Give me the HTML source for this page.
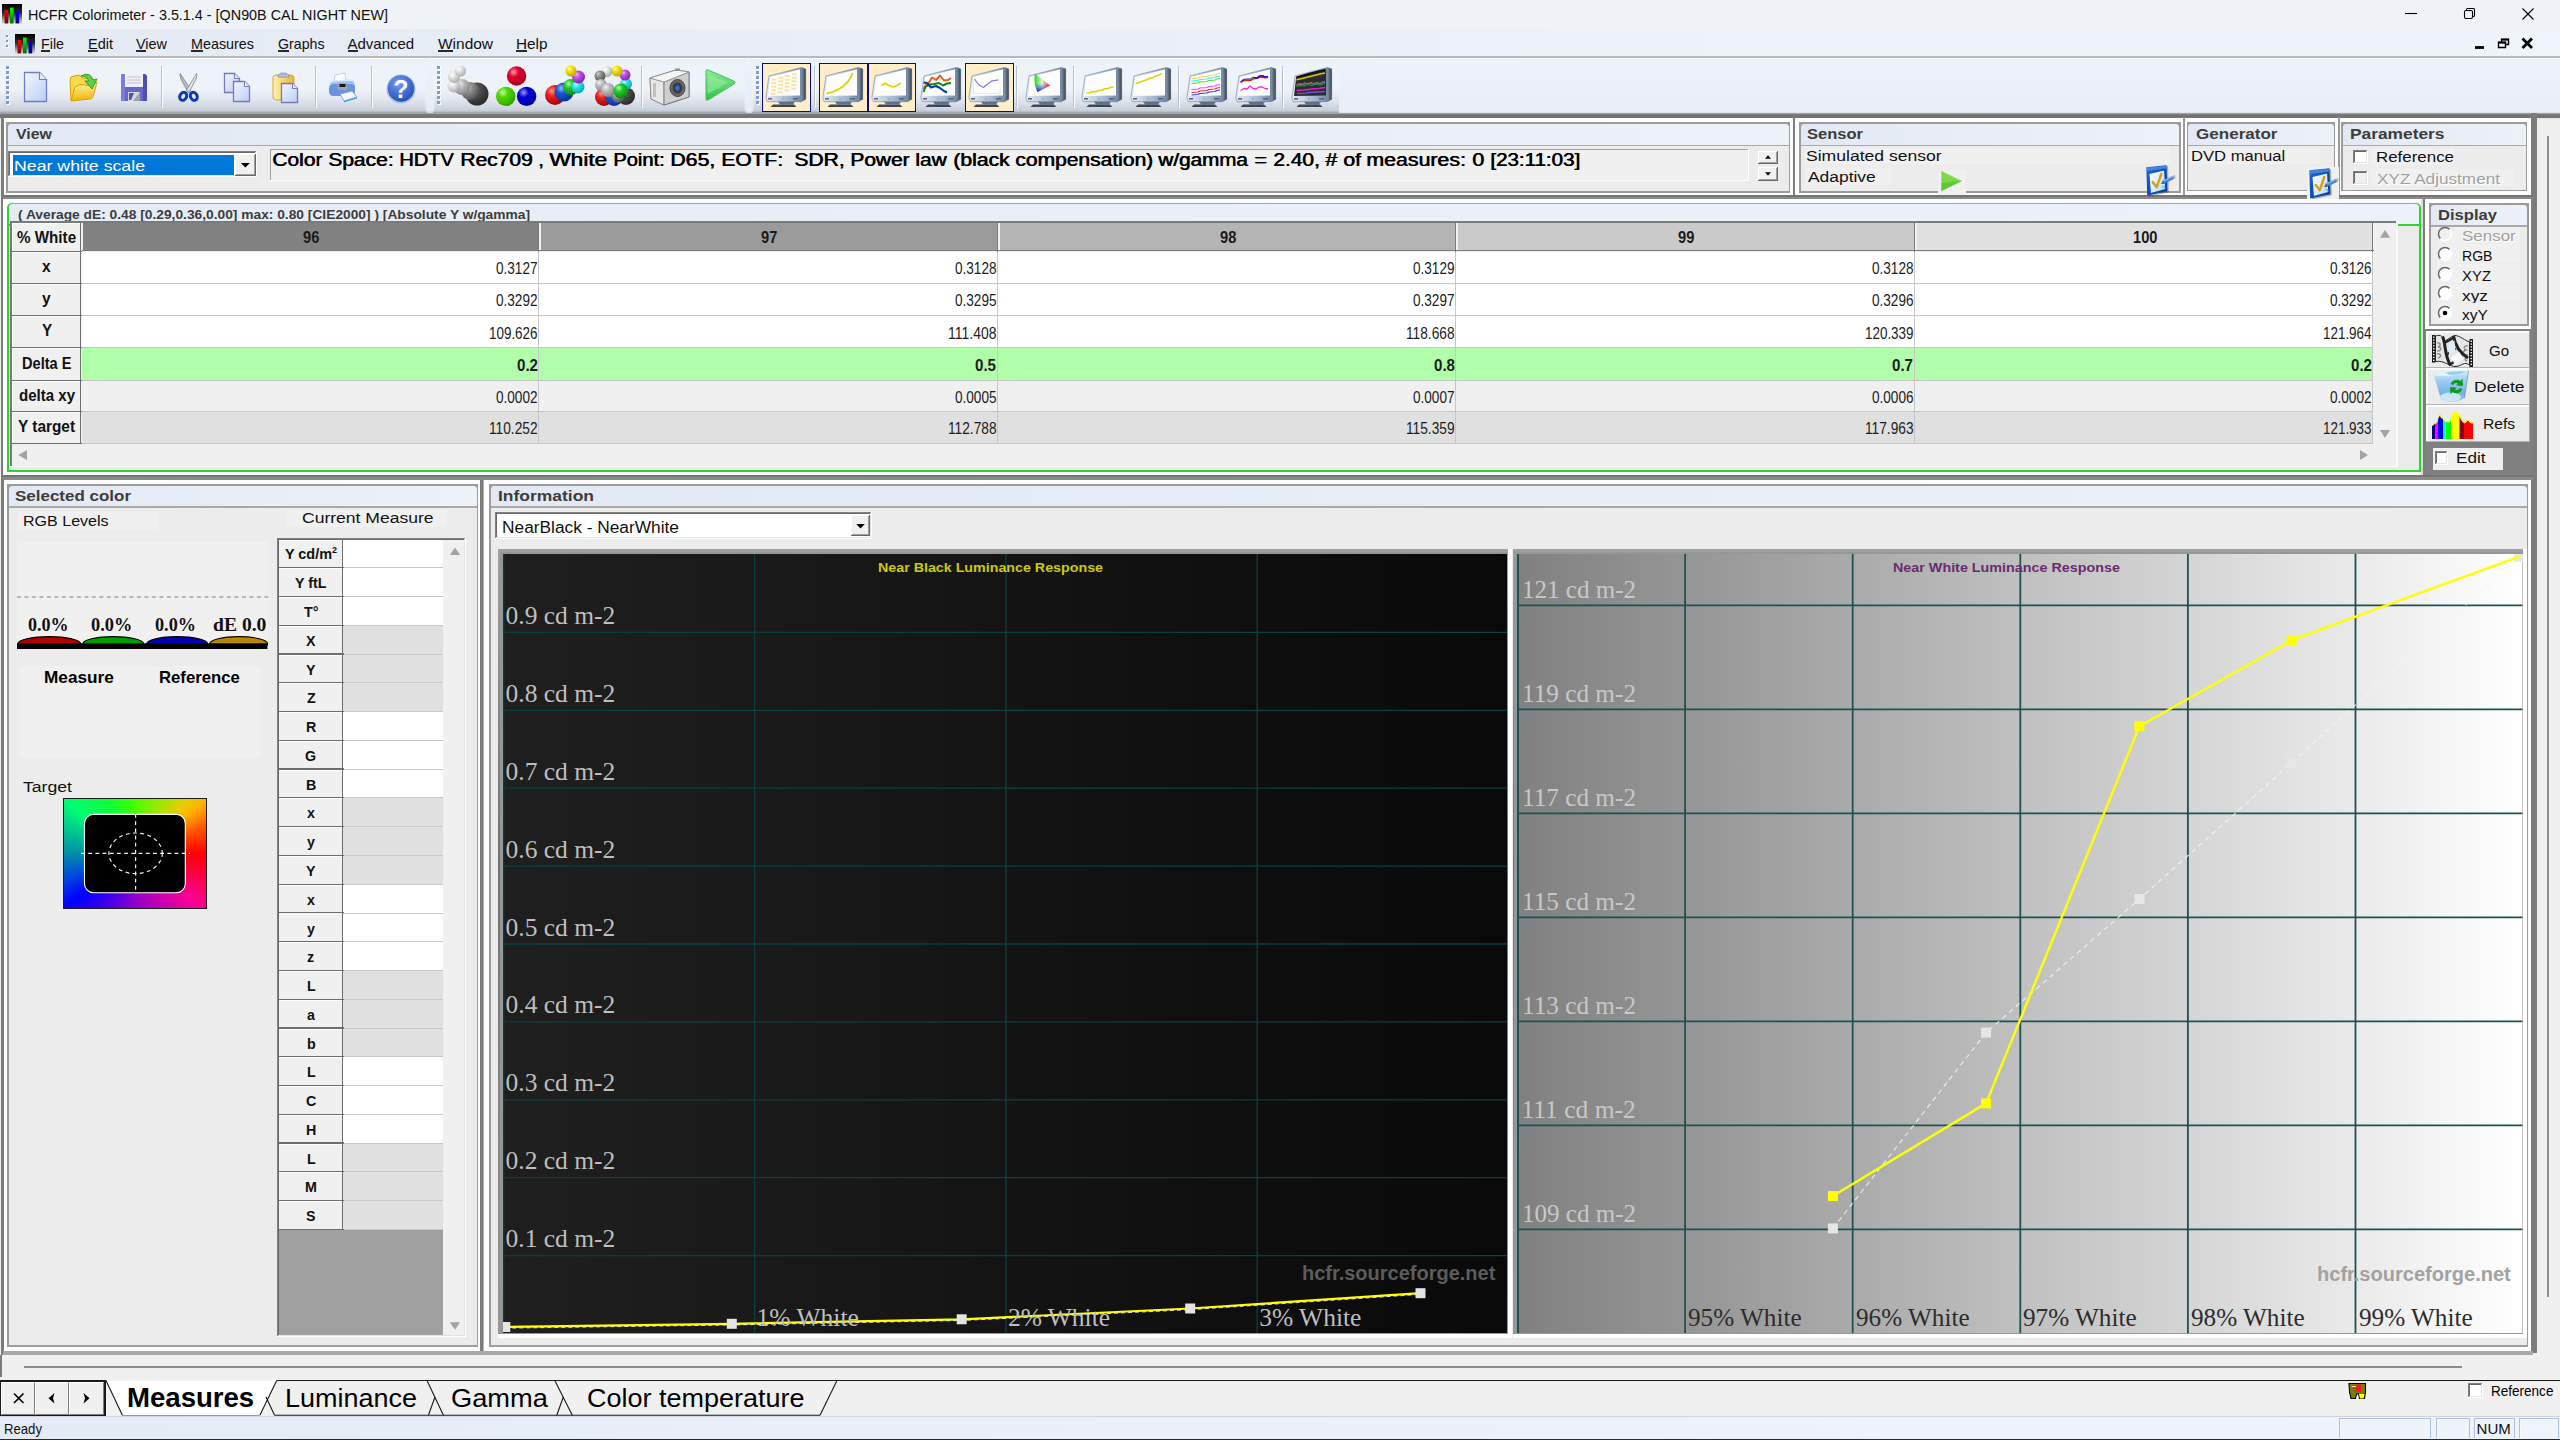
<!DOCTYPE html><html><head><meta charset="utf-8"><title>HCFR Colorimeter</title><style>html,body{margin:0;padding:0;}html{width:2560px;height:1440px;overflow:hidden;}body{width:2560px;height:1440px;overflow:hidden;position:relative;background:#f0f0f0;font-family:"Liberation Sans",sans-serif;}div,span,svg{position:absolute;box-sizing:border-box;}span{display:block;}</style></head><body><div style="left:0px;top:0px;width:2560px;height:29px;background:#eff2f6;"></div>
<svg style="left:2px;top:4px" width="20" height="20" viewBox="0 0 20 20"><defs><linearGradient id="ig2" x1="0" y1="0" x2="0" y2="1"><stop offset="0" stop-color="#000"/><stop offset=".45" stop-color="#2a2a2a"/><stop offset="1" stop-color="#e8e8e8"/></linearGradient><linearGradient id="ir2" x1="0" y1="0" x2="0" y2="1"><stop offset="0" stop-color="#ff0000"/><stop offset="1" stop-color="#7a0000"/></linearGradient><linearGradient id="igr2" x1="0" y1="0" x2="0" y2="1"><stop offset="0" stop-color="#00ff00"/><stop offset="1" stop-color="#006a00"/></linearGradient><linearGradient id="ib2" x1="0" y1="0" x2="0" y2="1"><stop offset="0" stop-color="#0000ff"/><stop offset="1" stop-color="#00007a"/></linearGradient></defs><rect width="20" height="20" fill="url(#ig2)"/><rect x="2.6" y="6" width="3.6" height="13.4" fill="url(#ir2)"/><rect x="8" y="3.6" width="3.6" height="15.8" fill="url(#igr2)"/><rect x="13.6" y="7.4" width="3.6" height="12" fill="url(#ib2)"/></svg>
<span style="left:27.50px;top:7px;font:400 15.5px/15.5px 'Liberation Sans',sans-serif;color:#101010;white-space:pre;transform-origin:0 0;transform:scaleX(0.9268);">HCFR Colorimeter - 3.5.1.4 - [QN90B CAL NIGHT NEW]</span>
<svg style="left:2380px;top:0" width="180" height="29" viewBox="0 0 180 29" fill="none" stroke="#000" stroke-width="1.1"><path d="M25 13.500H37"/><rect x="84.5" y="10.5" width="8" height="8" rx="1.5"/><path d="M86.5 10.5V9.5Q86.5 8.5 87.5 8.5H93.5Q94.5 8.5 94.5 9.5V15.5Q94.5 16.5 93.5 16.5H92.5"/><path d="M142.5 8.5L153.5 19.5M153.5 8.5L142.5 19.5"/></svg>
<div style="left:0px;top:29px;width:2560px;height:28px;background:linear-gradient(90deg,#e4eaf4 0,#e8edf6 25%,#eef2f9 70%,#eff3fa 100%);"></div>
<div style="left:0px;top:56.2px;width:2560px;height:1.5px;background:#b6b8bc;"></div>
<div style="left:0px;top:57.7px;width:2560px;height:1.8px;background:#fafbfd;"></div>
<div style="left:7px;top:36px;width:2px;height:2px;background:#fff;"></div>
<div style="left:6px;top:35px;width:2px;height:2px;background:#7f99bf;"></div>
<div style="left:7px;top:41px;width:2px;height:2px;background:#fff;"></div>
<div style="left:6px;top:40px;width:2px;height:2px;background:#7f99bf;"></div>
<div style="left:7px;top:46px;width:2px;height:2px;background:#fff;"></div>
<div style="left:6px;top:45px;width:2px;height:2px;background:#7f99bf;"></div>
<svg style="left:15px;top:34px" width="20" height="20" viewBox="0 0 20 20"><defs><linearGradient id="ig15" x1="0" y1="0" x2="0" y2="1"><stop offset="0" stop-color="#000"/><stop offset=".45" stop-color="#2a2a2a"/><stop offset="1" stop-color="#e8e8e8"/></linearGradient><linearGradient id="ir15" x1="0" y1="0" x2="0" y2="1"><stop offset="0" stop-color="#ff0000"/><stop offset="1" stop-color="#7a0000"/></linearGradient><linearGradient id="igr15" x1="0" y1="0" x2="0" y2="1"><stop offset="0" stop-color="#00ff00"/><stop offset="1" stop-color="#006a00"/></linearGradient><linearGradient id="ib15" x1="0" y1="0" x2="0" y2="1"><stop offset="0" stop-color="#0000ff"/><stop offset="1" stop-color="#00007a"/></linearGradient></defs><rect width="20" height="20" fill="url(#ig15)"/><rect x="2.6" y="6" width="3.6" height="13.4" fill="url(#ir15)"/><rect x="8" y="3.6" width="3.6" height="15.8" fill="url(#igr15)"/><rect x="13.6" y="7.4" width="3.6" height="12" fill="url(#ib15)"/></svg>
<span style="left:41.00px;top:36px;font:400 15px/15px 'Liberation Sans',sans-serif;color:#111;white-space:pre;transform-origin:0 0;transform:scaleX(0.9515);">File</span>
<div style="left:41px;top:50px;width:9px;height:1.7px;background:#2a2a2a;"></div>
<span style="left:87.50px;top:36px;font:400 15px/15px 'Liberation Sans',sans-serif;color:#111;white-space:pre;transform-origin:0 0;transform:scaleX(0.9672);">Edit</span>
<div style="left:87.5px;top:50px;width:10px;height:1.7px;background:#2a2a2a;"></div>
<span style="left:136.00px;top:36px;font:400 15px/15px 'Liberation Sans',sans-serif;color:#111;white-space:pre;transform-origin:0 0;transform:scaleX(0.9614);">View</span>
<div style="left:136px;top:50px;width:10px;height:1.7px;background:#2a2a2a;"></div>
<span style="left:191.00px;top:36px;font:400 15px/15px 'Liberation Sans',sans-serif;color:#111;white-space:pre;transform-origin:0 0;transform:scaleX(0.9565);">Measures</span>
<div style="left:191px;top:50px;width:12px;height:1.7px;background:#2a2a2a;"></div>
<span style="left:277.50px;top:36px;font:400 15px/15px 'Liberation Sans',sans-serif;color:#111;white-space:pre;transform-origin:0 0;transform:scaleX(0.9453);">Graphs</span>
<div style="left:277.5px;top:50px;width:11px;height:1.7px;background:#2a2a2a;"></div>
<span style="left:347.50px;top:36px;font:400 15px/15px 'Liberation Sans',sans-serif;color:#111;white-space:pre;transform-origin:0 0;">Advanced</span>
<div style="left:347.5px;top:50px;width:10px;height:1.7px;background:#2a2a2a;"></div>
<span style="left:437.50px;top:36px;font:400 15px/15px 'Liberation Sans',sans-serif;color:#111;white-space:pre;transform-origin:0 0;transform:scaleX(1.0309);">Window</span>
<div style="left:437.5px;top:50px;width:15px;height:1.7px;background:#2a2a2a;"></div>
<span style="left:516.00px;top:36px;font:400 15px/15px 'Liberation Sans',sans-serif;color:#111;white-space:pre;transform-origin:0 0;transform:scaleX(1.0210);">Help</span>
<div style="left:516px;top:50px;width:11px;height:1.7px;background:#2a2a2a;"></div>
<svg style="left:2460px;top:30px" width="100" height="26" viewBox="0 0 100 26" fill="none" stroke="#000"><path d="M15 17.500H24" stroke-width="2.800"/><path d="M38.5 12.5h7v5h-7zM41.5 12.5v-3h7v5h-3" stroke-width="1.4"/><path d="M38 12.5h8M41 9.5h8" stroke-width="2"/><path d="M62.500 8.500l9.500 9.500M72 8.500l-9.500 9.500" stroke-width="2.800"/></svg>
<div style="left:0px;top:59.5px;width:2560px;height:53.5px;background:linear-gradient(#e9eff7 0%,#eef3f9 6%,#eef3f9 55%,#e1e6ef 74%,#cfd5df 91%,#c6ccd6 96%,#9a9ea6 100%);"></div>
<div style="left:0px;top:113px;width:2560px;height:4px;background:linear-gradient(#9a9a9a,#7c7c7c 50%,#8a8a8a);"></div>
<div style="left:0px;top:117px;width:2560px;height:3px;background:linear-gradient(#d8d8d8,#f0f0f0);"></div>
<div style="left:1338.5px;top:59px;width:1221.5px;height:54px;background:linear-gradient(#eef2f9,#e9eef7);"></div>
<div style="left:1338.5px;top:112px;width:1221.5px;height:1px;background:#dfe4ec;"></div>
<div style="left:7px;top:67.2px;width:3px;height:3px;background:#fff;"></div>
<div style="left:6px;top:66.2px;width:3px;height:3px;background:#7f9cc4;"></div>
<div style="left:7px;top:72.2px;width:3px;height:3px;background:#fff;"></div>
<div style="left:6px;top:71.2px;width:3px;height:3px;background:#7f9cc4;"></div>
<div style="left:7px;top:77.2px;width:3px;height:3px;background:#fff;"></div>
<div style="left:6px;top:76.2px;width:3px;height:3px;background:#7f9cc4;"></div>
<div style="left:7px;top:82.2px;width:3px;height:3px;background:#fff;"></div>
<div style="left:6px;top:81.2px;width:3px;height:3px;background:#7f9cc4;"></div>
<div style="left:7px;top:87.2px;width:3px;height:3px;background:#fff;"></div>
<div style="left:6px;top:86.2px;width:3px;height:3px;background:#7f9cc4;"></div>
<div style="left:7px;top:92.2px;width:3px;height:3px;background:#fff;"></div>
<div style="left:6px;top:91.2px;width:3px;height:3px;background:#7f9cc4;"></div>
<div style="left:7px;top:97.2px;width:3px;height:3px;background:#fff;"></div>
<div style="left:6px;top:96.2px;width:3px;height:3px;background:#7f9cc4;"></div>
<div style="left:7px;top:102.2px;width:3px;height:3px;background:#fff;"></div>
<div style="left:6px;top:101.2px;width:3px;height:3px;background:#7f9cc4;"></div>
<div style="left:438.3px;top:67.2px;width:3px;height:3px;background:#fff;"></div>
<div style="left:437.3px;top:66.2px;width:3px;height:3px;background:#7f9cc4;"></div>
<div style="left:438.3px;top:72.2px;width:3px;height:3px;background:#fff;"></div>
<div style="left:437.3px;top:71.2px;width:3px;height:3px;background:#7f9cc4;"></div>
<div style="left:438.3px;top:77.2px;width:3px;height:3px;background:#fff;"></div>
<div style="left:437.3px;top:76.2px;width:3px;height:3px;background:#7f9cc4;"></div>
<div style="left:438.3px;top:82.2px;width:3px;height:3px;background:#fff;"></div>
<div style="left:437.3px;top:81.2px;width:3px;height:3px;background:#7f9cc4;"></div>
<div style="left:438.3px;top:87.2px;width:3px;height:3px;background:#fff;"></div>
<div style="left:437.3px;top:86.2px;width:3px;height:3px;background:#7f9cc4;"></div>
<div style="left:438.3px;top:92.2px;width:3px;height:3px;background:#fff;"></div>
<div style="left:437.3px;top:91.2px;width:3px;height:3px;background:#7f9cc4;"></div>
<div style="left:438.3px;top:97.2px;width:3px;height:3px;background:#fff;"></div>
<div style="left:437.3px;top:96.2px;width:3px;height:3px;background:#7f9cc4;"></div>
<div style="left:438.3px;top:102.2px;width:3px;height:3px;background:#fff;"></div>
<div style="left:437.3px;top:101.2px;width:3px;height:3px;background:#7f9cc4;"></div>
<div style="left:757px;top:67.2px;width:3px;height:3px;background:#fff;"></div>
<div style="left:756px;top:66.2px;width:3px;height:3px;background:#7f9cc4;"></div>
<div style="left:757px;top:72.2px;width:3px;height:3px;background:#fff;"></div>
<div style="left:756px;top:71.2px;width:3px;height:3px;background:#7f9cc4;"></div>
<div style="left:757px;top:77.2px;width:3px;height:3px;background:#fff;"></div>
<div style="left:756px;top:76.2px;width:3px;height:3px;background:#7f9cc4;"></div>
<div style="left:757px;top:82.2px;width:3px;height:3px;background:#fff;"></div>
<div style="left:756px;top:81.2px;width:3px;height:3px;background:#7f9cc4;"></div>
<div style="left:757px;top:87.2px;width:3px;height:3px;background:#fff;"></div>
<div style="left:756px;top:86.2px;width:3px;height:3px;background:#7f9cc4;"></div>
<div style="left:757px;top:92.2px;width:3px;height:3px;background:#fff;"></div>
<div style="left:756px;top:91.2px;width:3px;height:3px;background:#7f9cc4;"></div>
<div style="left:757px;top:97.2px;width:3px;height:3px;background:#fff;"></div>
<div style="left:756px;top:96.2px;width:3px;height:3px;background:#7f9cc4;"></div>
<div style="left:757px;top:102.2px;width:3px;height:3px;background:#fff;"></div>
<div style="left:756px;top:101.2px;width:3px;height:3px;background:#7f9cc4;"></div>
<div style="left:427px;top:59.3px;width:6px;height:53.2px;background:linear-gradient(#eef3f9,#e6ecf5);border-radius:3px;box-shadow:0 0 0 1.5px rgba(236,241,248,.7);"></div>
<div style="left:745.5px;top:59.3px;width:6px;height:53.2px;background:linear-gradient(#eef3f9,#e6ecf5);border-radius:3px;box-shadow:0 0 0 1.5px rgba(236,241,248,.7);"></div>
<div style="left:161px;top:66px;width:1px;height:41px;background:#b9c1ce;"></div>
<div style="left:162px;top:67px;width:1px;height:41px;background:#fbfcfe;"></div>
<div style="left:315px;top:66px;width:1px;height:41px;background:#b9c1ce;"></div>
<div style="left:316px;top:67px;width:1px;height:41px;background:#fbfcfe;"></div>
<div style="left:371px;top:66px;width:1px;height:41px;background:#b9c1ce;"></div>
<div style="left:372px;top:67px;width:1px;height:41px;background:#fbfcfe;"></div>
<div style="left:641px;top:66px;width:1px;height:41px;background:#b9c1ce;"></div>
<div style="left:642px;top:67px;width:1px;height:41px;background:#fbfcfe;"></div>
<div style="left:814px;top:66px;width:1px;height:41px;background:#b9c1ce;"></div>
<div style="left:815px;top:67px;width:1px;height:41px;background:#fbfcfe;"></div>
<div style="left:1016px;top:66px;width:1px;height:41px;background:#b9c1ce;"></div>
<div style="left:1017px;top:67px;width:1px;height:41px;background:#fbfcfe;"></div>
<div style="left:1073px;top:66px;width:1px;height:41px;background:#b9c1ce;"></div>
<div style="left:1074px;top:67px;width:1px;height:41px;background:#fbfcfe;"></div>
<div style="left:1178px;top:66px;width:1px;height:41px;background:#b9c1ce;"></div>
<div style="left:1179px;top:67px;width:1px;height:41px;background:#fbfcfe;"></div>
<div style="left:1282px;top:66px;width:1px;height:41px;background:#b9c1ce;"></div>
<div style="left:1283px;top:67px;width:1px;height:41px;background:#fbfcfe;"></div>
<svg width="0" height="0" style="left:0;top:0"><defs>
<linearGradient id="pg" x1="0" y1="0" x2="1" y2="1"><stop offset="0" stop-color="#f4f7ff"/><stop offset="1" stop-color="#b9cdf6"/></linearGradient>
<linearGradient id="fold" x1="0" y1="0" x2="0" y2="1"><stop offset="0" stop-color="#fff7a8"/><stop offset="1" stop-color="#f0b400"/></linearGradient>
<linearGradient id="clip" x1="0" y1="0" x2="1" y2="0"><stop offset="0" stop-color="#fdf3b0"/><stop offset="1" stop-color="#e8b530"/></linearGradient>
<radialGradient id="hb" cx=".4" cy=".3" r=".8"><stop offset="0" stop-color="#6f9cf0"/><stop offset="1" stop-color="#1b47b8"/></radialGradient>
<linearGradient id="mon" x1="0" y1="0" x2="1" y2="0"><stop offset="0" stop-color="#e6edf6"/><stop offset=".6" stop-color="#9fb4cd"/><stop offset="1" stop-color="#5f7896"/></linearGradient>
<linearGradient id="monside" x1="0" y1="0" x2="1" y2="0"><stop offset="0" stop-color="#7f93aa"/><stop offset="1" stop-color="#39424d"/></linearGradient>
<linearGradient id="cam" x1="0" y1="0" x2="0" y2="1"><stop offset="0" stop-color="#f4f4f4"/><stop offset="1" stop-color="#b4b4b4"/></linearGradient>
<linearGradient id="play" x1="0" y1="0" x2="0" y2="1"><stop offset="0" stop-color="#8fe89a"/><stop offset=".6" stop-color="#55d266"/><stop offset="1" stop-color="#2fbf45"/></linearGradient>
<linearGradient id="cie" x1="0" y1="0" x2="1" y2="0"><stop offset="0" stop-color="#18d818"/><stop offset=".5" stop-color="#e8f0d0"/><stop offset="1" stop-color="#ff1010"/></linearGradient>
<linearGradient id="cie2" x1="0" y1="0" x2="0" y2="1"><stop offset="0" stop-color="#20e020" stop-opacity="0"/><stop offset=".55" stop-color="#3050ff" stop-opacity="0"/><stop offset="1" stop-color="#1010ff" stop-opacity="1"/></linearGradient>
<radialGradient id="br" cx=".35" cy=".3" r=".75"><stop offset="0" stop-color="#ff9aa8"/><stop offset=".35" stop-color="#e0002c"/><stop offset="1" stop-color="#a80020"/></radialGradient><radialGradient id="bg" cx=".35" cy=".3" r=".75"><stop offset="0" stop-color="#c8ff9a"/><stop offset=".35" stop-color="#4cd800"/><stop offset="1" stop-color="#2fa000"/></radialGradient><radialGradient id="bb" cx=".35" cy=".3" r=".75"><stop offset="0" stop-color="#9a9aff"/><stop offset=".35" stop-color="#0000d8"/><stop offset="1" stop-color="#000098"/></radialGradient><radialGradient id="bw" cx=".35" cy=".3" r=".75"><stop offset="0" stop-color="#ffffff"/><stop offset=".35" stop-color="#e4e4e4"/><stop offset="1" stop-color="#a8a8a8"/></radialGradient><radialGradient id="bl" cx=".35" cy=".3" r=".75"><stop offset="0" stop-color="#f4f4f4"/><stop offset=".35" stop-color="#c0c0c0"/><stop offset="1" stop-color="#808080"/></radialGradient><radialGradient id="bm" cx=".35" cy=".3" r=".75"><stop offset="0" stop-color="#d0d0d0"/><stop offset=".35" stop-color="#909090"/><stop offset="1" stop-color="#505050"/></radialGradient><radialGradient id="bd" cx=".35" cy=".3" r=".75"><stop offset="0" stop-color="#909090"/><stop offset=".35" stop-color="#505050"/><stop offset="1" stop-color="#282828"/></radialGradient><radialGradient id="by" cx=".35" cy=".3" r=".75"><stop offset="0" stop-color="#ffffc0"/><stop offset=".35" stop-color="#f4e000"/><stop offset="1" stop-color="#c0a800"/></radialGradient><radialGradient id="bp" cx=".35" cy=".3" r=".75"><stop offset="0" stop-color="#f0b0ff"/><stop offset=".35" stop-color="#c050e8"/><stop offset="1" stop-color="#8020b0"/></radialGradient><radialGradient id="bc" cx=".35" cy=".3" r=".75"><stop offset="0" stop-color="#c0ffff"/><stop offset=".35" stop-color="#30e0e8"/><stop offset="1" stop-color="#10a0b0"/></radialGradient><radialGradient id="bR" cx=".35" cy=".3" r=".75"><stop offset="0" stop-color="#ff9090"/><stop offset=".35" stop-color="#e82020"/><stop offset="1" stop-color="#a00000"/></radialGradient><radialGradient id="bB" cx=".35" cy=".3" r=".75"><stop offset="0" stop-color="#90c0ff"/><stop offset=".35" stop-color="#1858d0"/><stop offset="1" stop-color="#0030a0"/></radialGradient><radialGradient id="bG" cx=".35" cy=".3" r=".75"><stop offset="0" stop-color="#b0ffb0"/><stop offset=".35" stop-color="#20c828"/><stop offset="1" stop-color="#108018"/></radialGradient></defs></svg>
<svg style="left:22px;top:70px" width="28" height="34" viewBox="0 0 28 34"><path d="M2.5 2.5H17.5L24.5 9.5V31.5H2.5Z" fill="url(#pg)" stroke="#6a7fc0" stroke-width="1.3"/><path d="M17.5 2.5V9.5H24.5" fill="#e8eefc" stroke="#6a7fc0" stroke-width="1.1"/></svg>
<svg style="left:66px;top:70px" width="36" height="34" viewBox="0 0 36 34"><path d="M4 10Q4 6 8 6L13 5L17 8L27 9V14L5 30Z" fill="#f7d94a" stroke="#d9a100" stroke-width="1"/><path d="M5 31L9 17Q14 13 19 15T31 12L27 27Q26 29 24 29Z" fill="url(#fold)" stroke="#d9a100" stroke-width="1"/><path d="M15 6Q24 1 27 10L31 9L26 19L19 11L23 11Q21 6 15 6Z" fill="#5fd04a" stroke="#2f9e28" stroke-width="1"/></svg>
<svg style="left:119px;top:72px" width="30" height="32" viewBox="0 0 30 32"><path d="M2 3Q2 2 3 2H26L28 4V28Q28 29 27 29H3Q2 29 2 28Z" fill="#6468c8"/><path d="M2 3Q2 2 3 2H6V29H3Q2 29 2 28Z" fill="#7a7ed8"/><path d="M24 2H26L28 4V28Q28 29 27 29H24Z" fill="#4c50b0"/><rect x="6" y="2" width="18" height="13" fill="#f0f0f4"/><path d="M8 5H22M8 8H22M8 11H22" stroke="#c4c4cc" stroke-width="1"/><rect x="9" y="20" width="12" height="9" fill="#d8d8dc"/><path d="M10 21H15L12 28H10Z" fill="#4c50b0"/><path d="M21 20V29H14Z" fill="#a0a0a8"/></svg>
<svg style="left:177px;top:72px" width="24" height="31" viewBox="0 0 24 31"><path d="M3.200 1.500Q2.500 3 4 7L11 20.500L14 18Z" fill="#b4bac6" stroke="#6c7488" stroke-width=".7"/><path d="M19.500 1.500Q20.500 3 19 7L12 20.500L9.500 18Z" fill="#dfe3ea" stroke="#6c7488" stroke-width=".7"/><ellipse cx="6.200" cy="24.300" rx="3.300" ry="4.200" fill="none" stroke="#0c3ab4" stroke-width="3" transform="rotate(28 6.200 24.300)"/><ellipse cx="16.800" cy="24.300" rx="3.300" ry="4.200" fill="none" stroke="#0c3ab4" stroke-width="3" transform="rotate(-28 16.800 24.300)"/></svg>
<svg style="left:222px;top:71px" width="30" height="32" viewBox="0 0 30 32"><path d="M2.5 2.5H12.5L17.5 7.5V21.5H2.5Z" fill="url(#pg)" stroke="#7a7ab8" stroke-width="1.3"/><path d="M12.5 2.5V7.5H17.5" fill="#e8eefc" stroke="#7a7ab8"/><path d="M11.500 10.500H22.500L27.500 15.500V30.500H11.500Z" fill="url(#pg)" stroke="#7a7ab8" stroke-width="1.3"/><path d="M22.5 10.5V15.5H27.5" fill="#e8eefc" stroke="#7a7ab8"/></svg>
<svg style="left:271px;top:71px" width="30" height="33" viewBox="0 0 30 33"><rect x="2" y="4" width="21" height="25" rx="3" fill="url(#clip)" stroke="#d8a828" stroke-width="1"/><path d="M7 6Q7 3 9 3H16Q18 3 18 6Z" fill="#c8ccd8" stroke="#8088a0" stroke-width=".8"/><rect x="9" y="1.500" width="7" height="3" rx="1" fill="#a8b0c4"/><path d="M10.500 12.500H21.500L26.500 17.500V31.500H10.500Z" fill="url(#pg)" stroke="#7a7ab8" stroke-width="1.3"/><path d="M21.5 12.5V17.5H26.5" fill="#e8eefc" stroke="#7a7ab8"/></svg>
<svg style="left:326px;top:72px" width="32" height="31" viewBox="0 0 32 31"><path d="M9 3L19 1L20 12L8 13Z" fill="#fdfdff" stroke="#b8c4d8" stroke-width=".8"/><path d="M3 14Q3 9 9 9L24 8Q29 8 29 13V20Q29 24 24 24H8Q3 24 3 19Z" fill="#a4c0f0"/><path d="M3 17Q3 12 9 12H24Q29 12 29 16V20Q29 24 24 24H8Q3 24 3 19Z" fill="#6c94dc"/><path d="M3 14Q3 9 9 9L24 8Q29 8 29 13" fill="none" stroke="#dbe8ff" stroke-width="1.4"/><rect x="12" y="11" width="9" height="7" rx="1" fill="#a0a4ac"/><rect x="13.500" y="12" width="6" height="3" fill="#181818"/><path d="M14 22L26 19L31 25L18 29Z" fill="#f4f8ff" stroke="#7098d8" stroke-width=".8"/><path d="M18 29L31 25V26.500L18 30.500Z" fill="#40a8e0"/></svg>
<svg style="left:385px;top:73px" width="32" height="32" viewBox="0 0 32 32"><circle cx="16" cy="16" r="14.6" fill="#aebcdc"/><circle cx="16" cy="15.500" r="13.2" fill="url(#hb)"/><text x="16" y="25" font-family="Liberation Sans, sans-serif" font-weight="700" font-size="25" fill="#fff" text-anchor="middle">?</text></svg>
<svg style="left:446px;top:65px" width="44" height="44" viewBox="0 0 44 44"><circle cx="31" cy="29" r="11.5" fill="url(#bd)"/><circle cx="24" cy="26" r="9" fill="url(#bm)"/><circle cx="16" cy="22" r="8" fill="url(#bl)"/><circle cx="8" cy="21" r="6.5" fill="url(#bw)"/><circle cx="8" cy="12" r="6" fill="url(#bw)"/><circle cx="14.5" cy="6" r="5.5" fill="url(#bw)"/></svg>
<svg style="left:495px;top:65px" width="44" height="44" viewBox="0 0 44 44"><circle cx="21.6" cy="11" r="9.7" fill="url(#br)"/><circle cx="10.8" cy="31.4" r="9.7" fill="url(#bg)"/><circle cx="31.6" cy="31.4" r="9.7" fill="url(#bb)"/></svg>
<svg style="left:544px;top:65px" width="44" height="44" viewBox="0 0 44 44"><circle cx="11" cy="30" r="10" fill="url(#bR)"/><circle cx="20" cy="27" r="9.5" fill="url(#bB)"/><circle cx="27" cy="22" r="8" fill="url(#bG)"/><circle cx="34" cy="22" r="6.5" fill="url(#bc)"/><circle cx="34.5" cy="12" r="6.5" fill="url(#bp)"/><circle cx="27" cy="6" r="5.5" fill="url(#by)"/></svg>
<svg style="left:593px;top:65px" width="44" height="44" viewBox="0 0 44 44"><circle cx="11" cy="32" r="9" fill="url(#bR)"/><circle cx="21" cy="32" r="9" fill="url(#bB)"/><circle cx="33" cy="31" r="9" fill="url(#bd)"/><circle cx="25" cy="32" r="6" fill="url(#bm)"/><circle cx="33" cy="19" r="6" fill="url(#bc)"/><circle cx="32" cy="10" r="5.5" fill="url(#bp)"/><circle cx="24" cy="6" r="5.5" fill="url(#by)"/><circle cx="14" cy="6.5" r="5.5" fill="url(#bw)"/><circle cx="7" cy="11" r="5.5" fill="url(#bm)"/><circle cx="8" cy="20" r="6" fill="url(#bl)"/><circle cx="15" cy="25" r="7" fill="url(#bl)"/><circle cx="28" cy="26" r="7.5" fill="url(#bG)"/></svg>
<svg style="left:648px;top:66px" width="44" height="42" viewBox="0 0 44 42"><path d="M2 12L28 4L41 6V31L16 39L3 33Z" fill="url(#cam)" stroke="#707070" stroke-width="1"/><path d="M2 12L16 16V39L3 33Z" fill="#e8e8e8" stroke="#8a8a8a" stroke-width=".8"/><path d="M16 16L41 6V31L16 39Z" fill="#cfcfcf" stroke="#707070" stroke-width=".8"/><path d="M2 12L28 4L41 6L16 16Z" fill="#f6f6f6" stroke="#8a8a8a" stroke-width=".8"/><rect x="5" y="17" width="3" height="14" fill="#c0c0c0"/><ellipse cx="29.500" cy="22" rx="7.500" ry="8.500" fill="#686868" stroke="#404040"/><ellipse cx="29.500" cy="22" rx="5" ry="5.800" fill="#3c3c44"/><ellipse cx="29.500" cy="22" rx="2.300" ry="2.600" fill="#2a6cd8"/><rect x="27" y="2.500" width="5" height="2.500" fill="#909090"/></svg>
<svg style="left:703px;top:68px" width="34" height="36" viewBox="0 0 34 36"><path d="M3 3Q3 1 5 2L31 13Q33 14 31 16L5 32Q3 33 3 31Z" fill="url(#play)" stroke="#3fc455" stroke-width="1"/><path d="M4.500 6L25 14.500L4.500 26Z" fill="#9aeea6" opacity=".55"/></svg>
<div style="left:762px;top:62.5px;width:48.8px;height:49px;background:#ffeec8;border:1.5px solid #0a0a8c;"></div>
<svg style="left:762px;top:62.5px" width="49" height="49" viewBox="0 0 49 49"><path d="M7 12.9L39.300 4.500L43.700 5.900V36.300L39.300 38.700H5.300L3.800 35Z" fill="url(#mon)"/><path d="M39.300 4.500L43.700 5.900V36.300L39.300 38.700Z" fill="url(#monside)"/><path d="M8.200 14L38 6.300V32.600L6 33Z" fill="#fdfdfd"/><rect x="9.5" y="15.5" width="5" height="2" fill="#ffe0a0"/><rect x="16.3" y="13.75" width="5" height="2" fill="#ffe0a0"/><rect x="23.1" y="12.0" width="5" height="2" fill="#ffe0a0"/><rect x="29.9" y="10.25" width="5" height="2" fill="#ffe0a0"/><rect x="9.3" y="19.1" width="5" height="2" fill="#ffe0a0"/><rect x="16.1" y="17.35" width="5" height="2" fill="#ffe0a0"/><rect x="22.900000000000002" y="15.600000000000001" width="5" height="2" fill="#ffe0a0"/><rect x="29.7" y="13.850000000000001" width="5" height="2" fill="#ffe0a0"/><rect x="9.1" y="22.7" width="5" height="2" fill="#ffe0a0"/><rect x="15.9" y="20.95" width="5" height="2" fill="#ffe0a0"/><rect x="22.700000000000003" y="19.2" width="5" height="2" fill="#ffe0a0"/><rect x="29.5" y="17.45" width="5" height="2" fill="#ffe0a0"/><rect x="8.9" y="26.3" width="5" height="2" fill="#ffe0a0"/><rect x="15.700000000000001" y="24.55" width="5" height="2" fill="#ffe0a0"/><rect x="22.5" y="22.8" width="5" height="2" fill="#ffe0a0"/><rect x="29.299999999999997" y="21.05" width="5" height="2" fill="#ffe0a0"/><rect x="8.7" y="29.9" width="5" height="2" fill="#ffe0a0"/><rect x="15.5" y="28.15" width="5" height="2" fill="#ffe0a0"/><rect x="22.3" y="26.4" width="5" height="2" fill="#ffe0a0"/><rect x="29.099999999999998" y="24.65" width="5" height="2" fill="#ffe0a0"/><path d="M7 12.9L39.300 4.500L43.700 5.900V36.300L39.300 38.700H5.300L3.800 35Z" fill="none" stroke="#5a6f8a" stroke-width=".7" opacity=".7"/><rect x="6" y="35" width="4" height="1.600" fill="#5a6a7c"/><rect x="31" y="35" width="5" height="1.600" fill="#5a6a7c"/><circle cx="21" cy="36" r=".8" fill="#8a9ab0"/><path d="M16 38.700H33L31 41.600H18Z" fill="#5d7088"/><path d="M11 41.600H32L34.500 44H8.500Z" fill="#3c4654"/></svg>
<div style="left:819px;top:62.5px;width:48.8px;height:49px;background:#ffeec8;border:1.5px solid #0a0a8c;"></div>
<svg style="left:819px;top:62.5px" width="49" height="49" viewBox="0 0 49 49"><path d="M7 12.9L39.300 4.500L43.700 5.900V36.300L39.300 38.700H5.300L3.800 35Z" fill="url(#mon)"/><path d="M39.300 4.500L43.700 5.900V36.300L39.300 38.700Z" fill="url(#monside)"/><path d="M8.200 14L38 6.300V32.600L6 33Z" fill="#fdfdfd"/><polyline points="7.500,30.500 12,29.500 18,27.200 24,23.500 29,18.500 32,14 33.500,10" fill="none" stroke="#e0d400" stroke-width="1.8" stroke-linejoin="round"/><path d="M7 12.9L39.300 4.500L43.700 5.900V36.300L39.300 38.700H5.300L3.800 35Z" fill="none" stroke="#5a6f8a" stroke-width=".7" opacity=".7"/><rect x="6" y="35" width="4" height="1.600" fill="#5a6a7c"/><rect x="31" y="35" width="5" height="1.600" fill="#5a6a7c"/><circle cx="21" cy="36" r=".8" fill="#8a9ab0"/><path d="M16 38.700H33L31 41.600H18Z" fill="#5d7088"/><path d="M11 41.600H32L34.500 44H8.500Z" fill="#3c4654"/></svg>
<div style="left:867.5px;top:62.5px;width:48.8px;height:49px;background:#ffeec8;border:1.5px solid #0a0a8c;"></div>
<svg style="left:867.5px;top:62.5px" width="49" height="49" viewBox="0 0 49 49"><path d="M7 12.9L39.300 4.500L43.700 5.900V36.300L39.300 38.700H5.300L3.800 35Z" fill="url(#mon)"/><path d="M39.300 4.500L43.700 5.900V36.300L39.300 38.700Z" fill="url(#monside)"/><path d="M8.200 14L38 6.300V32.600L6 33Z" fill="#fdfdfd"/><polyline points="13.500,22.500 17,20.300 21,22.500 25,24 29,22.500 33,20" fill="none" stroke="#e0d400" stroke-width="1.7" stroke-linejoin="round"/><path d="M7 12.9L39.300 4.500L43.700 5.900V36.300L39.300 38.700H5.300L3.800 35Z" fill="none" stroke="#5a6f8a" stroke-width=".7" opacity=".7"/><rect x="6" y="35" width="4" height="1.600" fill="#5a6a7c"/><rect x="31" y="35" width="5" height="1.600" fill="#5a6a7c"/><circle cx="21" cy="36" r=".8" fill="#8a9ab0"/><path d="M16 38.700H33L31 41.600H18Z" fill="#5d7088"/><path d="M11 41.600H32L34.500 44H8.500Z" fill="#3c4654"/></svg>
<svg style="left:917px;top:62.5px" width="49" height="49" viewBox="0 0 49 49"><path d="M7 12.9L39.300 4.500L43.700 5.900V36.300L39.300 38.700H5.300L3.800 35Z" fill="url(#mon)"/><path d="M39.300 4.500L43.700 5.900V36.300L39.300 38.700Z" fill="url(#monside)"/><path d="M8.200 14L38 6.300V32.600L6 33Z" fill="#fdfdfd"/><polyline points="6.500,26 8.500,22.500 12,19.500 15,14.500 19,17 23,12.500 27,17.500 31,17 34,15" fill="none" stroke="#e85820" stroke-width="2" stroke-linejoin="round"/><polyline points="6.500,29 8.500,24 13,21.500 17,21 22,20 26,22.500 30,20.500 34,20" fill="none" stroke="#108818" stroke-width="2" stroke-linejoin="round"/><polyline points="6.500,19.500 10,20 14,24.500 19,23 23,25 27,28 30,29.500" fill="none" stroke="#0838a8" stroke-width="2" stroke-linejoin="round"/><path d="M7 12.9L39.300 4.500L43.700 5.900V36.300L39.300 38.700H5.300L3.800 35Z" fill="none" stroke="#5a6f8a" stroke-width=".7" opacity=".7"/><rect x="6" y="35" width="4" height="1.600" fill="#5a6a7c"/><rect x="31" y="35" width="5" height="1.600" fill="#5a6a7c"/><circle cx="21" cy="36" r=".8" fill="#8a9ab0"/><path d="M16 38.700H33L31 41.600H18Z" fill="#5d7088"/><path d="M11 41.600H32L34.500 44H8.500Z" fill="#3c4654"/></svg>
<div style="left:965px;top:62.5px;width:48.8px;height:49px;background:#ffeec8;border:1.5px solid #0a0a8c;"></div>
<svg style="left:965px;top:62.5px" width="49" height="49" viewBox="0 0 49 49"><path d="M7 12.9L39.300 4.500L43.700 5.900V36.300L39.300 38.700H5.300L3.800 35Z" fill="url(#mon)"/><path d="M39.300 4.500L43.700 5.900V36.300L39.300 38.700Z" fill="url(#monside)"/><path d="M8.200 14L38 6.300V32.600L6 33Z" fill="#fdfdfd"/><path d="M8.500 30.500H36M8.500 18V30.500" stroke="#d8d8d8" stroke-width=".6" fill="none"/><path d="M35 11V30" stroke="#b8e0b0" stroke-width=".6" stroke-dasharray="1 1"/><polyline points="9.500,16.200 14,22 18.500,24.500 22,21.500 27,17.800 33.500,16.800" fill="none" stroke="#8c78e0" stroke-width="1.2" stroke-linejoin="round"/><path d="M7 12.9L39.300 4.500L43.700 5.900V36.300L39.300 38.700H5.300L3.800 35Z" fill="none" stroke="#5a6f8a" stroke-width=".7" opacity=".7"/><rect x="6" y="35" width="4" height="1.600" fill="#5a6a7c"/><rect x="31" y="35" width="5" height="1.600" fill="#5a6a7c"/><circle cx="21" cy="36" r=".8" fill="#8a9ab0"/><path d="M16 38.700H33L31 41.600H18Z" fill="#5d7088"/><path d="M11 41.600H32L34.500 44H8.500Z" fill="#3c4654"/></svg>
<svg style="left:1022px;top:62.5px" width="49" height="49" viewBox="0 0 49 49"><path d="M7 12.9L39.300 4.500L43.700 5.900V36.300L39.300 38.700H5.300L3.800 35Z" fill="url(#mon)"/><path d="M39.300 4.500L43.700 5.900V36.300L39.300 38.700Z" fill="url(#monside)"/><path d="M8.200 14L38 6.300V32.600L6 33Z" fill="#fdfdfd"/><path d="M13 10.500L28 22.500L15.500 29Q11 20 13 10.500Z" fill="url(#cie)"/><path d="M13 10.500L28 22.500L15.500 29Q11 20 13 10.500Z" fill="url(#cie2)"/><path d="M7 12.9L39.300 4.500L43.700 5.900V36.300L39.300 38.700H5.300L3.800 35Z" fill="none" stroke="#5a6f8a" stroke-width=".7" opacity=".7"/><rect x="6" y="35" width="4" height="1.600" fill="#5a6a7c"/><rect x="31" y="35" width="5" height="1.600" fill="#5a6a7c"/><circle cx="21" cy="36" r=".8" fill="#8a9ab0"/><path d="M16 38.700H33L31 41.600H18Z" fill="#5d7088"/><path d="M11 41.600H32L34.500 44H8.500Z" fill="#3c4654"/></svg>
<svg style="left:1078px;top:62.5px" width="49" height="49" viewBox="0 0 49 49"><path d="M7 12.9L39.300 4.500L43.700 5.900V36.300L39.300 38.700H5.300L3.800 35Z" fill="url(#mon)"/><path d="M39.300 4.500L43.700 5.900V36.300L39.300 38.700Z" fill="url(#monside)"/><path d="M8.200 14L38 6.300V32.600L6 33Z" fill="#fdfdfd"/><polyline points="8.500,30 12,29.800 14,28.800 18,28.600 20,27.500 24,27.200 26,26 30,25.500 32,24.500 35.500,23.800" fill="none" stroke="#e0d400" stroke-width="1.6" stroke-linejoin="round"/><path d="M7 12.9L39.300 4.500L43.700 5.900V36.300L39.300 38.700H5.300L3.800 35Z" fill="none" stroke="#5a6f8a" stroke-width=".7" opacity=".7"/><rect x="6" y="35" width="4" height="1.600" fill="#5a6a7c"/><rect x="31" y="35" width="5" height="1.600" fill="#5a6a7c"/><circle cx="21" cy="36" r=".8" fill="#8a9ab0"/><path d="M16 38.700H33L31 41.600H18Z" fill="#5d7088"/><path d="M11 41.600H32L34.500 44H8.500Z" fill="#3c4654"/></svg>
<svg style="left:1127px;top:62.5px" width="49" height="49" viewBox="0 0 49 49"><path d="M7 12.9L39.300 4.500L43.700 5.900V36.300L39.300 38.700H5.300L3.800 35Z" fill="url(#mon)"/><path d="M39.300 4.500L43.700 5.900V36.300L39.300 38.700Z" fill="url(#monside)"/><path d="M8.200 14L38 6.300V32.600L6 33Z" fill="#fdfdfd"/><polyline points="8.500,20.500 12,19.800 15,18.200 19,17 22,15.500 26,14.500 29,13 32,12.200 34.500,10.500" fill="none" stroke="#e0d400" stroke-width="1.6" stroke-linejoin="round"/><path d="M7 12.9L39.300 4.500L43.700 5.900V36.300L39.300 38.700H5.300L3.800 35Z" fill="none" stroke="#5a6f8a" stroke-width=".7" opacity=".7"/><rect x="6" y="35" width="4" height="1.600" fill="#5a6a7c"/><rect x="31" y="35" width="5" height="1.600" fill="#5a6a7c"/><circle cx="21" cy="36" r=".8" fill="#8a9ab0"/><path d="M16 38.700H33L31 41.600H18Z" fill="#5d7088"/><path d="M11 41.600H32L34.500 44H8.500Z" fill="#3c4654"/></svg>
<svg style="left:1183px;top:62.5px" width="49" height="49" viewBox="0 0 49 49"><path d="M7 12.9L39.300 4.500L43.700 5.900V36.300L39.300 38.700H5.300L3.800 35Z" fill="url(#mon)"/><path d="M39.300 4.500L43.700 5.900V36.300L39.300 38.700Z" fill="url(#monside)"/><path d="M8.200 14L38 6.300V32.600L6 33Z" fill="#fdfdfd"/><polyline points="8.500,15.5 15,15.0 17,14.0 24,13.5 26,12.5 32,12.0 34,11.0 37,10.5" fill="none" stroke="#e8d838" stroke-width="1.2" stroke-linejoin="round"/><polyline points="8.500,18 15,17.5 17,16.5 24,16 26,15 32,14.5 34,13.5 37,13" fill="none" stroke="#30f0f0" stroke-width="1.2" stroke-linejoin="round"/><polyline points="8.500,20.5 15,20.0 17,19.0 24,18.5 26,17.5 32,17.0 34,16.0 37,15.5" fill="none" stroke="#30e838" stroke-width="1.2" stroke-linejoin="round"/><polyline points="8.500,26.5 15,26.0 17,25.0 24,24.5 26,23.5 32,23.0 34,22.0 37,21.5" fill="none" stroke="#ff40e0" stroke-width="1.2" stroke-linejoin="round"/><polyline points="8.500,29.5 15,29.0 17,28.0 24,27.5 26,26.5 32,26.0 34,25.0 37,24.5" fill="none" stroke="#ff2020" stroke-width="1.2" stroke-linejoin="round"/><polyline points="8.500,32 15,31.5 17,30.5 24,30 26,29 32,28.5 34,27.5 37,27" fill="none" stroke="#3030ff" stroke-width="1.2" stroke-linejoin="round"/><path d="M7 12.9L39.300 4.500L43.700 5.900V36.300L39.300 38.700H5.300L3.800 35Z" fill="none" stroke="#5a6f8a" stroke-width=".7" opacity=".7"/><rect x="6" y="35" width="4" height="1.600" fill="#5a6a7c"/><rect x="31" y="35" width="5" height="1.600" fill="#5a6a7c"/><circle cx="21" cy="36" r=".8" fill="#8a9ab0"/><path d="M16 38.700H33L31 41.600H18Z" fill="#5d7088"/><path d="M11 41.600H32L34.500 44H8.500Z" fill="#3c4654"/></svg>
<svg style="left:1231.5px;top:62.5px" width="49" height="49" viewBox="0 0 49 49"><path d="M7 12.9L39.300 4.500L43.700 5.900V36.300L39.300 38.700H5.300L3.800 35Z" fill="url(#mon)"/><path d="M39.300 4.500L43.700 5.900V36.300L39.300 38.700Z" fill="url(#monside)"/><path d="M8.200 14L38 6.300V32.600L6 33Z" fill="#fdfdfd"/><polyline points="8.500,19.500 11,17.500 19,17 21,15.500 26,15 28,13.500 33,14.500 36,14" fill="none" stroke="#ff0000" stroke-width="1.8" stroke-linejoin="round"/><polyline points="10,18 12,16.500 19,16 21,14.500 25,15 27,13 31,12.600 33,14 36,13.500" fill="none" stroke="#1818e8" stroke-width="1.3" stroke-linejoin="round"/><polyline points="12,17 18,16.500 20,15.500 22,14.800" fill="none" stroke="#20c020" stroke-width="1.2" stroke-linejoin="round"/><polyline points="8.500,27.500 12,25.500 15,26 18,23 21,25.500 24,26 27,24 30,24 33,25.500 36,26" fill="none" stroke="#ff20e0" stroke-width="1.3" stroke-linejoin="round"/><path d="M7 12.9L39.300 4.500L43.700 5.900V36.300L39.300 38.700H5.300L3.800 35Z" fill="none" stroke="#5a6f8a" stroke-width=".7" opacity=".7"/><rect x="6" y="35" width="4" height="1.600" fill="#5a6a7c"/><rect x="31" y="35" width="5" height="1.600" fill="#5a6a7c"/><circle cx="21" cy="36" r=".8" fill="#8a9ab0"/><path d="M16 38.700H33L31 41.600H18Z" fill="#5d7088"/><path d="M11 41.600H32L34.500 44H8.500Z" fill="#3c4654"/></svg>
<svg style="left:1288px;top:62.5px" width="49" height="49" viewBox="0 0 49 49"><path d="M7 12.9L39.300 4.500L43.700 5.900V36.300L39.300 38.700H5.300L3.800 35Z" fill="url(#mon)"/><path d="M39.300 4.500L43.700 5.900V36.300L39.300 38.700Z" fill="url(#monside)"/><path d="M8.200 14L38 6.300V32.600L6 33Z" fill="#2c2c30"/><polyline points="8.500,14.500 20,11 30,8.500 37,7" fill="none" stroke="#101010" stroke-width="2" stroke-linejoin="round"/><polyline points="8.500,16.800 14,15.500 20,14 26,12.500 32,11 37,10" fill="none" stroke="#d8c400" stroke-width="1.4" stroke-linejoin="round"/><polyline points="8.500,22.500 11,21 14,22 17,20 20,21 23,19.500 26,21 29,19.500 32,20.500 35,19 37,19.500" fill="none" stroke="#e07020" stroke-width="1.3" stroke-linejoin="round"/><polyline points="8.500,23.500 12,22.500 16,23 20,21.500 24,22.500 28,21 32,22 37,20.500" fill="none" stroke="#20a040" stroke-width="1.2" stroke-linejoin="round"/><polyline points="8.500,21.500 12,20.500 16,21.500 20,20 24,21 28,19.800 32,20.500 37,19" fill="none" stroke="#2878d8" stroke-width="1" stroke-linejoin="round"/><polyline points="8.500,27.500 16,27 24,26 30,25.500 37,24.500" fill="none" stroke="#e020d0" stroke-width="1.3" stroke-linejoin="round"/><polyline points="9,30.500 18,30.300 20,29.500 30,29 37,28.500" fill="none" stroke="#6858c8" stroke-width="1.6" stroke-linejoin="round"/><path d="M7 12.9L39.300 4.500L43.700 5.900V36.300L39.300 38.700H5.300L3.800 35Z" fill="none" stroke="#5a6f8a" stroke-width=".7" opacity=".7"/><rect x="6" y="35" width="4" height="1.600" fill="#5a6a7c"/><rect x="31" y="35" width="5" height="1.600" fill="#5a6a7c"/><circle cx="21" cy="36" r=".8" fill="#8a9ab0"/><path d="M16 38.700H33L31 41.600H18Z" fill="#5d7088"/><path d="M11 41.600H32L34.500 44H8.500Z" fill="#3c4654"/></svg>
<div style="left:3px;top:117px;width:2529px;height:1234px;background:#fdfdfd;"></div>
<div style="left:0px;top:113px;width:2560px;height:4.5px;background:linear-gradient(#b4b4b4,#747474 35%,#747474);"></div>
<div style="left:1px;top:117px;width:2.5px;height:1260px;background:#7c7c7c;"></div>
<div style="left:2531px;top:113px;width:5.5px;height:1240px;background:#7c7c7c;"></div>
<div style="left:3px;top:194.5px;width:2530px;height:4.5px;background:linear-gradient(#747474 50%,#8a8a8a 50%);"></div>
<div style="left:3px;top:474.5px;width:2530px;height:5.5px;background:linear-gradient(#747474 45%,#8a8a8a 45%);"></div>
<div style="left:3px;top:1350.5px;width:2530px;height:4px;background:#a8a8a8;"></div>
<div style="left:1793px;top:117px;width:2px;height:78px;background:#7c7c7c;"></div>
<div style="left:2183px;top:117px;width:1.5px;height:78px;background:#9a9a9a;"></div>
<div style="left:2338px;top:117px;width:1.5px;height:78px;background:#9a9a9a;"></div>
<div style="left:480.3px;top:480px;width:2.3px;height:871px;background:#7c7c7c;"></div>
<div style="left:482.6px;top:480px;width:1.9px;height:871px;background:#b4b4b4;"></div>
<div style="left:2423px;top:199px;width:110px;height:276px;background:#808080;"></div>
<div style="left:6px;top:122px;width:1784px;height:70.5px;background:#9c9c9c;"></div>
<div style="left:7.5px;top:123.5px;width:1781px;height:67.5px;background:#ececec;border-radius:4px 4px 0 0;"></div>
<div style="left:7.5px;top:123.5px;width:1781px;height:21px;background:linear-gradient(90deg,#e3e9f4,#edf1f8);border-radius:4px 4px 0 0;"></div>
<div style="left:7.5px;top:144.5px;width:1781px;height:1.5px;background:#a9a9a9;"></div>
<span style="left:15.50px;top:127px;font:700 14.5px/14.5px 'Liberation Sans',sans-serif;color:#3c3c3c;white-space:pre;transform-origin:0 0;transform:scaleX(1.0982);">View</span>
<div style="left:1799px;top:122px;width:381.5px;height:70.5px;background:#9c9c9c;"></div>
<div style="left:1800.5px;top:123.5px;width:378.5px;height:67.5px;background:#ececec;border-radius:4px 4px 0 0;"></div>
<div style="left:1800.5px;top:123.5px;width:378.5px;height:21px;background:linear-gradient(90deg,#e3e9f4,#edf1f8);border-radius:4px 4px 0 0;"></div>
<div style="left:1800.5px;top:144.5px;width:378.5px;height:1.5px;background:#a9a9a9;"></div>
<span style="left:1807.40px;top:127px;font:700 14.5px/14.5px 'Liberation Sans',sans-serif;color:#3c3c3c;white-space:pre;transform-origin:0 0;transform:scaleX(1.1392);">Sensor</span>
<div style="left:2186.5px;top:122px;width:148.5px;height:69px;background:#9c9c9c;"></div>
<div style="left:2188.0px;top:123.5px;width:145.5px;height:66px;background:#ececec;border-radius:4px 4px 0 0;"></div>
<div style="left:2188.0px;top:123.5px;width:145.5px;height:21px;background:linear-gradient(90deg,#e3e9f4,#edf1f8);border-radius:4px 4px 0 0;"></div>
<div style="left:2188.0px;top:144.5px;width:145.5px;height:1.5px;background:#a9a9a9;"></div>
<span style="left:2195.60px;top:127px;font:700 14.5px/14.5px 'Liberation Sans',sans-serif;color:#3c3c3c;white-space:pre;transform-origin:0 0;transform:scaleX(1.1760);">Generator</span>
<div style="left:2341px;top:122px;width:186px;height:69px;background:#9c9c9c;"></div>
<div style="left:2342.5px;top:123.5px;width:183px;height:66px;background:#ececec;border-radius:4px 4px 0 0;"></div>
<div style="left:2342.5px;top:123.5px;width:183px;height:21px;background:linear-gradient(90deg,#e3e9f4,#edf1f8);border-radius:4px 4px 0 0;"></div>
<div style="left:2342.5px;top:144.5px;width:183px;height:1.5px;background:#a9a9a9;"></div>
<span style="left:2350.30px;top:127px;font:700 14.5px/14.5px 'Liberation Sans',sans-serif;color:#3c3c3c;white-space:pre;transform-origin:0 0;transform:scaleX(1.1962);">Parameters</span>
<div style="left:2425px;top:199px;width:106px;height:129.5px;background:#fdfdfd;"></div>
<div style="left:2429px;top:203px;width:99.5px;height:122.5px;background:#9c9c9c;"></div>
<div style="left:2430.5px;top:204.5px;width:96.5px;height:119.5px;background:#ececec;border-radius:4px 4px 0 0;"></div>
<div style="left:2430.5px;top:204.5px;width:96.5px;height:20.5px;background:linear-gradient(90deg,#e3e9f4,#edf1f8);border-radius:4px 4px 0 0;"></div>
<div style="left:2430.5px;top:225.0px;width:96.5px;height:1.5px;background:#a9a9a9;"></div>
<span style="left:2438.00px;top:208px;font:700 14.5px/14.5px 'Liberation Sans',sans-serif;color:#3c3c3c;white-space:pre;transform-origin:0 0;transform:scaleX(1.1439);">Display</span>
<div style="left:8px;top:150.5px;width:249px;height:26.5px;background:#fff;"></div>
<div style="left:8px;top:150.5px;width:249px;height:1px;background:#828282;"></div>
<div style="left:8px;top:150.5px;width:1px;height:26.5px;background:#828282;"></div>
<div style="left:9px;top:151.5px;width:247px;height:1px;background:#696969;"></div>
<div style="left:9px;top:151.5px;width:1px;height:24.5px;background:#696969;"></div>
<div style="left:8px;top:176.0px;width:249px;height:1px;background:#fff;"></div>
<div style="left:256px;top:150.5px;width:1px;height:26.5px;background:#fff;"></div>
<div style="left:9px;top:175.0px;width:247px;height:1px;background:#e3e3e3;"></div>
<div style="left:255px;top:151.5px;width:1px;height:24.5px;background:#e3e3e3;"></div>
<div style="left:12.5px;top:155px;width:221.5px;height:20px;background:#0078d7;"></div>
<span style="left:14.00px;top:158px;font:400 15.5px/15.5px 'Liberation Sans',sans-serif;color:#fff;white-space:pre;transform-origin:0 0;transform:scaleX(1.1433);">Near white scale</span>
<div style="left:235px;top:154px;width:20.5px;height:21.5px;background:#f0f0f0;"></div>
<div style="left:235px;top:154px;width:20.5px;height:1px;background:#fff;"></div>
<div style="left:235px;top:154px;width:1px;height:21.5px;background:#fff;"></div>
<div style="left:235px;top:174.5px;width:20.5px;height:1px;background:#696969;"></div>
<div style="left:254.5px;top:154px;width:1px;height:21.5px;background:#696969;"></div>
<div style="left:236px;top:173.5px;width:18.5px;height:1px;background:#a0a0a0;"></div>
<div style="left:253.5px;top:155px;width:1px;height:19.5px;background:#a0a0a0;"></div>
<svg style="left:0;top:0" width="2560" height="1440"><polygon points="240.9,162.95 249.9,162.95 245.4,167.45" fill="#000"/></svg>
<div style="left:270px;top:148.5px;width:1479px;height:32.5px;background:#f0f0f0;"></div>
<div style="left:270px;top:148.5px;width:1479px;height:1px;background:#a0a0a0;"></div>
<div style="left:270px;top:148.5px;width:1px;height:32.5px;background:#a0a0a0;"></div>
<div style="left:270px;top:180px;width:1479px;height:1px;background:#fff;"></div>
<div style="left:1748px;top:148.5px;width:1px;height:32.5px;background:#fff;"></div>
<span style="left:272.30px;top:152px;font:400 17.5px/17.5px 'Liberation Sans',sans-serif;color:#000;white-space:pre;transform-origin:0 0;transform:scaleX(1.1987);text-shadow:0.6px 0 0 #000;">Color Space:</span>
<span style="left:399.40px;top:152px;font:400 17.5px/17.5px 'Liberation Sans',sans-serif;color:#000;white-space:pre;transform-origin:0 0;transform:scaleX(1.1447);text-shadow:0.6px 0 0 #000;">HDTV</span>
<span style="left:459.50px;top:152px;font:400 17.5px/17.5px 'Liberation Sans',sans-serif;color:#000;white-space:pre;transform-origin:0 0;transform:scaleX(1.1997);text-shadow:0.6px 0 0 #000;">Rec709</span>
<span style="left:537.70px;top:152px;font:400 17.5px/17.5px 'Liberation Sans',sans-serif;color:#000;white-space:pre;transform-origin:0 0;transform:scaleX(1.1210);text-shadow:0.6px 0 0 #000;">,</span>
<span style="left:548.60px;top:152px;font:400 17.5px/17.5px 'Liberation Sans',sans-serif;color:#000;white-space:pre;transform-origin:0 0;transform:scaleX(1.2925);text-shadow:0.6px 0 0 #000;">White</span>
<span style="left:612.70px;top:152px;font:400 17.5px/17.5px 'Liberation Sans',sans-serif;color:#000;white-space:pre;transform-origin:0 0;transform:scaleX(1.1489);text-shadow:0.6px 0 0 #000;">Point:</span>
<span style="left:669.70px;top:152px;font:400 17.5px/17.5px 'Liberation Sans',sans-serif;color:#000;white-space:pre;transform-origin:0 0;transform:scaleX(1.2145);text-shadow:0.6px 0 0 #000;">D65,</span>
<span style="left:720.50px;top:152px;font:400 17.5px/17.5px 'Liberation Sans',sans-serif;color:#000;white-space:pre;transform-origin:0 0;transform:scaleX(1.1984);text-shadow:0.6px 0 0 #000;">EOTF:</span>
<span style="left:793.90px;top:152px;font:400 17.5px/17.5px 'Liberation Sans',sans-serif;color:#000;white-space:pre;transform-origin:0 0;transform:scaleX(1.2063);text-shadow:0.6px 0 0 #000;">SDR,</span>
<span style="left:850.20px;top:152px;font:400 17.5px/17.5px 'Liberation Sans',sans-serif;color:#000;white-space:pre;transform-origin:0 0;transform:scaleX(1.1952);text-shadow:0.6px 0 0 #000;">Power</span>
<span style="left:915.30px;top:152px;font:400 17.5px/17.5px 'Liberation Sans',sans-serif;color:#000;white-space:pre;transform-origin:0 0;transform:scaleX(1.1953);text-shadow:0.6px 0 0 #000;">law</span>
<span style="left:952.50px;top:152px;font:400 17.5px/17.5px 'Liberation Sans',sans-serif;color:#000;white-space:pre;transform-origin:0 0;transform:scaleX(1.2067);text-shadow:0.6px 0 0 #000;">(black</span>
<span style="left:1014.70px;top:152px;font:400 17.5px/17.5px 'Liberation Sans',sans-serif;color:#000;white-space:pre;transform-origin:0 0;transform:scaleX(1.2010);text-shadow:0.6px 0 0 #000;">compensation)</span>
<span style="left:1158.40px;top:152px;font:400 17.5px/17.5px 'Liberation Sans',sans-serif;color:#000;white-space:pre;transform-origin:0 0;transform:scaleX(1.1813);text-shadow:0.6px 0 0 #000;">w/gamma</span>
<span style="left:1253.75px;top:152px;font:400 17.5px/17.5px 'Liberation Sans',sans-serif;color:#000;white-space:pre;transform-origin:0 0;transform:scaleX(1.2432);text-shadow:0.6px 0 0 #000;">=</span>
<span style="left:1272.50px;top:152px;font:400 17.5px/17.5px 'Liberation Sans',sans-serif;color:#000;white-space:pre;transform-origin:0 0;transform:scaleX(1.1945);text-shadow:0.6px 0 0 #000;">2.40,</span>
<span style="left:1324.80px;top:152px;font:400 17.5px/17.5px 'Liberation Sans',sans-serif;color:#000;white-space:pre;transform-origin:0 0;transform:scaleX(1.2333);text-shadow:0.6px 0 0 #000;">#</span>
<span style="left:1342.80px;top:152px;font:400 17.5px/17.5px 'Liberation Sans',sans-serif;color:#000;white-space:pre;transform-origin:0 0;transform:scaleX(1.2130);text-shadow:0.6px 0 0 #000;">of</span>
<span style="left:1366.40px;top:152px;font:400 17.5px/17.5px 'Liberation Sans',sans-serif;color:#000;white-space:pre;transform-origin:0 0;transform:scaleX(1.2188);text-shadow:0.6px 0 0 #000;">measures:</span>
<span style="left:1471.90px;top:152px;font:400 17.5px/17.5px 'Liberation Sans',sans-serif;color:#000;white-space:pre;transform-origin:0 0;transform:scaleX(1.2265);text-shadow:0.6px 0 0 #000;">0</span>
<span style="left:1489.80px;top:152px;font:400 17.5px/17.5px 'Liberation Sans',sans-serif;color:#000;white-space:pre;transform-origin:0 0;transform:scaleX(1.1745);text-shadow:0.6px 0 0 #000;">[23:11:03]</span>
<div style="left:1758px;top:150.5px;width:20px;height:13.5px;background:#f0f0f0;"></div>
<div style="left:1758px;top:150.5px;width:20px;height:1px;background:#fff;"></div>
<div style="left:1758px;top:150.5px;width:1px;height:13.5px;background:#fff;"></div>
<div style="left:1758px;top:163.0px;width:20px;height:1px;background:#696969;"></div>
<div style="left:1777px;top:150.5px;width:1px;height:13.5px;background:#696969;"></div>
<div style="left:1759px;top:162.0px;width:18px;height:1px;background:#a0a0a0;"></div>
<div style="left:1776px;top:151.5px;width:1px;height:11.5px;background:#a0a0a0;"></div>
<div style="left:1758px;top:167px;width:20px;height:13.5px;background:#f0f0f0;"></div>
<div style="left:1758px;top:167px;width:20px;height:1px;background:#fff;"></div>
<div style="left:1758px;top:167px;width:1px;height:13.5px;background:#fff;"></div>
<div style="left:1758px;top:179.5px;width:20px;height:1px;background:#696969;"></div>
<div style="left:1777px;top:167px;width:1px;height:13.5px;background:#696969;"></div>
<div style="left:1759px;top:178.5px;width:18px;height:1px;background:#a0a0a0;"></div>
<div style="left:1776px;top:168px;width:1px;height:11.5px;background:#a0a0a0;"></div>
<svg style="left:0;top:0" width="2560" height="1440"><polygon points="1765.0,158.75 1771.0,158.75 1768,155.25" fill="#000"/></svg>
<svg style="left:0;top:0" width="2560" height="1440"><polygon points="1765.0,172.25 1771.0,172.25 1768,175.75" fill="#000"/></svg>
<div style="left:1805px;top:147.5px;width:365px;height:16px;background:#f0f0f0;"></div>
<div style="left:1805px;top:167.5px;width:86px;height:18px;background:#f0f0f0;"></div>
<span style="left:1805.60px;top:148px;font:400 15.5px/15.5px 'Liberation Sans',sans-serif;color:#111;white-space:pre;transform-origin:0 0;transform:scaleX(1.1331);">Simulated sensor</span>
<span style="left:1808.00px;top:169px;font:400 15.5px/15.5px 'Liberation Sans',sans-serif;color:#111;white-space:pre;transform-origin:0 0;transform:scaleX(1.1223);">Adaptive</span>
<div style="left:1938px;top:169.5px;width:28px;height:25px;background:#f0f0f0;"></div>
<svg style="left:1940px;top:170px" width="24" height="22" viewBox="0 0 24 22"><path d="M1.500 1.200L21.500 11L1.500 20.800Z" fill="#7fd84c" stroke="#a8e088" stroke-width="1"/><path d="M1.500 13L21.500 11L1.500 20.800Z" fill="#5cc832"/></svg>
<svg style="left:2146px;top:165px" width="31" height="32" viewBox="0 0 31 32"><defs><linearGradient id="ck2146" x1="0" y1="0" x2="1" y2="1"><stop offset="0" stop-color="#2a6cd4"/><stop offset=".5" stop-color="#0a4cb8"/><stop offset="1" stop-color="#083c98"/></linearGradient><linearGradient id="ci2146" x1="0" y1="0" x2="1" y2="1"><stop offset="0" stop-color="#ffffff"/><stop offset=".5" stop-color="#dcecff"/><stop offset="1" stop-color="#b4d8fc"/></linearGradient></defs><path d="M1.800 3.800L22 1.200L22.900 27.400L2.700 31.600Z" fill="#3a3a3a" opacity=".35"/><path d="M.3 2.300L20.500 .2L21.400 26.200L1.200 30.600Z" fill="url(#ck2146)"/><path d="M.8 2.700L20.200 .7L20.300 3.500L.9 6Z" fill="#4a94e4" opacity=".8"/><path d="M3.500 9L18 5.400L19.300 24L4.900 28Z" fill="url(#ci2146)"/><path d="M6.700 17L10.700 22.200L15.300 9" fill="none" stroke="#d8a010" stroke-width="2.400" stroke-linecap="round" stroke-linejoin="round"/><path d="M15.500 20.500L18.800 24L19 21.300Z" fill="#5cc0ff"/><path d="M16.800 17.400L27.600 12.200" stroke="#3c80d8" stroke-width="3.400"/><path d="M16.500 16.500L27.300 11.300" stroke="#8cc0f4" stroke-width="1.200"/><path d="M27.200 10.600L28.800 10L29.800 12.800L28.200 13.600Z" fill="#e6a0a0"/><path d="M17.300 15.700L14.800 18.700L18.300 18.900Z" fill="#5a5a3c"/></svg>
<div style="left:2190px;top:147.5px;width:130px;height:16px;background:#f0f0f0;"></div>
<span style="left:2190.50px;top:148px;font:400 15.5px/15.5px 'Liberation Sans',sans-serif;color:#111;white-space:pre;transform-origin:0 0;transform:scaleX(1.0720);">DVD manual</span>
<div style="left:2307px;top:167px;width:32px;height:32px;background:#f0f0f0;"></div>
<svg style="left:2309px;top:168px" width="31" height="32" viewBox="0 0 31 32"><defs><linearGradient id="ck2309" x1="0" y1="0" x2="1" y2="1"><stop offset="0" stop-color="#2a6cd4"/><stop offset=".5" stop-color="#0a4cb8"/><stop offset="1" stop-color="#083c98"/></linearGradient><linearGradient id="ci2309" x1="0" y1="0" x2="1" y2="1"><stop offset="0" stop-color="#ffffff"/><stop offset=".5" stop-color="#dcecff"/><stop offset="1" stop-color="#b4d8fc"/></linearGradient></defs><path d="M1.800 3.800L22 1.200L22.900 27.400L2.700 31.600Z" fill="#3a3a3a" opacity=".35"/><path d="M.3 2.300L20.500 .2L21.400 26.200L1.200 30.600Z" fill="url(#ck2309)"/><path d="M.8 2.700L20.200 .7L20.300 3.500L.9 6Z" fill="#4a94e4" opacity=".8"/><path d="M3.500 9L18 5.400L19.300 24L4.900 28Z" fill="url(#ci2309)"/><path d="M6.700 17L10.700 22.200L15.300 9" fill="none" stroke="#d8a010" stroke-width="2.400" stroke-linecap="round" stroke-linejoin="round"/><path d="M15.500 20.500L18.800 24L19 21.300Z" fill="#5cc0ff"/><path d="M16.800 17.400L27.600 12.200" stroke="#3c80d8" stroke-width="3.400"/><path d="M16.500 16.500L27.300 11.300" stroke="#8cc0f4" stroke-width="1.200"/><path d="M27.200 10.600L28.800 10L29.800 12.800L28.200 13.600Z" fill="#e6a0a0"/><path d="M17.300 15.700L14.800 18.700L18.300 18.900Z" fill="#5a5a3c"/></svg>
<div style="left:2371px;top:147.5px;width:83px;height:17px;background:#f0f0f0;"></div>
<div style="left:2371px;top:169px;width:143px;height:17px;background:#f0f0f0;"></div>
<div style="left:2353px;top:149.5px;width:14.5px;height:14.5px;background:#fff;"></div>
<div style="left:2353px;top:149.5px;width:14.5px;height:1px;background:#828282;"></div>
<div style="left:2353px;top:149.5px;width:1px;height:14.5px;background:#828282;"></div>
<div style="left:2354px;top:150.5px;width:12.5px;height:1px;background:#696969;"></div>
<div style="left:2354px;top:150.5px;width:1px;height:12.5px;background:#696969;"></div>
<div style="left:2353px;top:163.0px;width:14.5px;height:1px;background:#fff;"></div>
<div style="left:2366.5px;top:149.5px;width:1px;height:14.5px;background:#fff;"></div>
<div style="left:2354px;top:162.0px;width:12.5px;height:1px;background:#e3e3e3;"></div>
<div style="left:2365.5px;top:150.5px;width:1px;height:12.5px;background:#e3e3e3;"></div>
<span style="left:2376.40px;top:149px;font:400 15.5px/15.5px 'Liberation Sans',sans-serif;color:#111;white-space:pre;transform-origin:0 0;transform:scaleX(1.0907);">Reference</span>
<div style="left:2353px;top:170.5px;width:14.5px;height:14.5px;background:#f0f0f0;"></div>
<div style="left:2353px;top:170.5px;width:14.5px;height:1px;background:#828282;"></div>
<div style="left:2353px;top:170.5px;width:1px;height:14.5px;background:#828282;"></div>
<div style="left:2354px;top:171.5px;width:12.5px;height:1px;background:#696969;"></div>
<div style="left:2354px;top:171.5px;width:1px;height:12.5px;background:#696969;"></div>
<div style="left:2353px;top:184.0px;width:14.5px;height:1px;background:#fff;"></div>
<div style="left:2366.5px;top:170.5px;width:1px;height:14.5px;background:#fff;"></div>
<div style="left:2354px;top:183.0px;width:12.5px;height:1px;background:#e3e3e3;"></div>
<div style="left:2365.5px;top:171.5px;width:1px;height:12.5px;background:#e3e3e3;"></div>
<span style="left:2378.00px;top:172px;font:400 15.5px/15.5px 'Liberation Sans',sans-serif;color:#fff;white-space:pre;transform-origin:0 0;transform:scaleX(1.1067);">XYZ Adjustment</span>
<span style="left:2377.00px;top:171px;font:400 15.5px/15.5px 'Liberation Sans',sans-serif;color:#a0a0a0;white-space:pre;transform-origin:0 0;transform:scaleX(1.1067);">XYZ Adjustment</span>
<div style="left:2437px;top:226.5px;width:83px;height:16.0px;background:#f0f0f0;"></div>
<svg style="left:2437.4px;top:225.5px" width="16" height="16" viewBox="0 0 16 16"><circle cx="8" cy="8" r="6" fill="#f0f0f0"/><path d="M3.400 12.600A6.500 6.500 0 0 1 12.600 3.400" fill="none" stroke="#6a6a6a" stroke-width="1.5"/><path d="M12.600 3.400A6.500 6.500 0 0 1 3.400 12.600" fill="none" stroke="#fff" stroke-width="1.5"/></svg>
<span style="left:2462.90px;top:229px;font:400 15.5px/15.5px 'Liberation Sans',sans-serif;color:#fff;white-space:pre;transform-origin:0 0;transform:scaleX(1.0934);">Sensor</span>
<span style="left:2461.90px;top:228px;font:400 15.5px/15.5px 'Liberation Sans',sans-serif;color:#a0a0a0;white-space:pre;transform-origin:0 0;transform:scaleX(1.0934);">Sensor</span>
<div style="left:2437px;top:244.25px;width:83px;height:18.5px;background:#f0f0f0;"></div>
<svg style="left:2437.4px;top:245.75px" width="16" height="16" viewBox="0 0 16 16"><circle cx="8" cy="8" r="6" fill="#fff"/><path d="M3.400 12.600A6.500 6.500 0 0 1 12.600 3.400" fill="none" stroke="#6a6a6a" stroke-width="1.5"/><path d="M12.600 3.400A6.500 6.500 0 0 1 3.400 12.600" fill="none" stroke="#fff" stroke-width="1.5"/></svg>
<span style="left:2461.90px;top:248px;font:400 15.5px/15.5px 'Liberation Sans',sans-serif;color:#111;white-space:pre;transform-origin:0 0;transform:scaleX(0.9080);">RGB</span>
<div style="left:2437px;top:264.25px;width:83px;height:18.5px;background:#f0f0f0;"></div>
<svg style="left:2437.4px;top:265.75px" width="16" height="16" viewBox="0 0 16 16"><circle cx="8" cy="8" r="6" fill="#fff"/><path d="M3.400 12.600A6.500 6.500 0 0 1 12.600 3.400" fill="none" stroke="#6a6a6a" stroke-width="1.5"/><path d="M12.600 3.400A6.500 6.500 0 0 1 3.400 12.600" fill="none" stroke="#fff" stroke-width="1.5"/></svg>
<span style="left:2461.90px;top:268px;font:400 15.5px/15.5px 'Liberation Sans',sans-serif;color:#111;white-space:pre;transform-origin:0 0;transform:scaleX(0.9620);">XYZ</span>
<div style="left:2437px;top:283.8px;width:83px;height:18.5px;background:#f0f0f0;"></div>
<svg style="left:2437.4px;top:285.3px" width="16" height="16" viewBox="0 0 16 16"><circle cx="8" cy="8" r="6" fill="#fff"/><path d="M3.400 12.600A6.500 6.500 0 0 1 12.600 3.400" fill="none" stroke="#6a6a6a" stroke-width="1.5"/><path d="M12.600 3.400A6.500 6.500 0 0 1 3.400 12.600" fill="none" stroke="#fff" stroke-width="1.5"/></svg>
<span style="left:2461.90px;top:288px;font:400 15.5px/15.5px 'Liberation Sans',sans-serif;color:#111;white-space:pre;transform-origin:0 0;transform:scaleX(1.1183);">xyz</span>
<div style="left:2437px;top:303.2px;width:83px;height:18.5px;background:#f0f0f0;"></div>
<svg style="left:2437.4px;top:304.7px" width="16" height="16" viewBox="0 0 16 16"><circle cx="8" cy="8" r="6" fill="#fff"/><path d="M3.400 12.600A6.500 6.500 0 0 1 12.600 3.400" fill="none" stroke="#6a6a6a" stroke-width="1.5"/><path d="M12.600 3.400A6.500 6.500 0 0 1 3.400 12.600" fill="none" stroke="#fff" stroke-width="1.5"/><circle cx="8" cy="8" r="2.300" fill="#000"/></svg>
<span style="left:2461.90px;top:307px;font:400 15.5px/15.5px 'Liberation Sans',sans-serif;color:#111;white-space:pre;transform-origin:0 0;transform:scaleX(1.0062);">xyY</span>
<div style="left:2426px;top:330.5px;width:104px;height:37.19999999999999px;background:#ebebeb;"></div>
<div style="left:2426px;top:330.5px;width:104px;height:2px;background:#fbfbfb;"></div>
<div style="left:2426px;top:330.5px;width:1.5px;height:37.19999999999999px;background:#fbfbfb;"></div>
<div style="left:2426px;top:366.7px;width:104px;height:1px;background:#b4b4b4;"></div>
<div style="left:2528.5px;top:330.5px;width:1.5px;height:37.19999999999999px;background:#a6a6a6;"></div>
<span style="left:2489.00px;top:343px;font:400 15.5px/15.5px 'Liberation Sans',sans-serif;color:#111;white-space:pre;transform-origin:0 0;transform:scaleX(0.9673);">Go</span>
<div style="left:2426px;top:367.7px;width:104px;height:37.0px;background:#ebebeb;"></div>
<div style="left:2426px;top:367.7px;width:104px;height:2px;background:#fbfbfb;"></div>
<div style="left:2426px;top:367.7px;width:1.5px;height:37.0px;background:#fbfbfb;"></div>
<div style="left:2426px;top:403.7px;width:104px;height:1px;background:#b4b4b4;"></div>
<div style="left:2528.5px;top:367.7px;width:1.5px;height:37.0px;background:#a6a6a6;"></div>
<span style="left:2474.00px;top:379px;font:400 15.5px/15.5px 'Liberation Sans',sans-serif;color:#111;white-space:pre;transform-origin:0 0;transform:scaleX(1.1293);">Delete</span>
<div style="left:2426px;top:404.7px;width:104px;height:37.30000000000001px;background:#ebebeb;"></div>
<div style="left:2426px;top:404.7px;width:104px;height:2px;background:#fbfbfb;"></div>
<div style="left:2426px;top:404.7px;width:1.5px;height:37.30000000000001px;background:#fbfbfb;"></div>
<div style="left:2426px;top:441px;width:104px;height:1px;background:#b4b4b4;"></div>
<div style="left:2528.5px;top:404.7px;width:1.5px;height:37.30000000000001px;background:#a6a6a6;"></div>
<span style="left:2483.00px;top:416px;font:400 15.5px/15.5px 'Liberation Sans',sans-serif;color:#111;white-space:pre;transform-origin:0 0;transform:scaleX(1.0103);">Refs</span>
<svg style="left:2432px;top:333.500px" width="41" height="33" viewBox="0 0 41 33"><path d="M3.500 2C9 0 11 3 13 7L21 2C26 0 30 5 37.500 8V31C32 27 30 32 24 32.500C17 33 13 26 3.500 27.500Z" fill="#e6e6e6" stroke="#2a2a2a" stroke-width="1"/><path d="M5 9C9 8 9 12 6 13C10 13 10 17 5 17M5 20C9 19 10 23 6 24M36 12C32 11 31 15 34 16C30 17 31 21 36 21M36 23C33 23 32 26 35 27" fill="none" stroke="#8a8a8a" stroke-width="1.4"/><path d="M10.500 2.500C14 9 12 21 18.500 31.500M21.500 2C23 11 28 19 36 24" fill="none" stroke="#222" stroke-width="3"/><path d="M12.500 9L22 3.500M14 21L24 14.500M19 30L30 22" stroke="#222" stroke-width="2.200" fill="none"/><path d="M16.500 10L22.500 6.500L23.500 17L17 21Z" fill="#dcecfc"/><path d="M19 23.500L27 18L31.500 24L23 31Z" fill="#f6faff"/><rect x="0" y="1" width="3.500" height="27.500" fill="#1a1a1a"/><rect x="37.500" y="5" width="3.500" height="28" fill="#1a1a1a"/><rect x="1" y="2.5" width="1.500" height="1.300" fill="#fff"/><rect x="1" y="5.4" width="1.500" height="1.300" fill="#fff"/><rect x="1" y="8.3" width="1.500" height="1.300" fill="#fff"/><rect x="1" y="11.2" width="1.500" height="1.300" fill="#fff"/><rect x="1" y="14.1" width="1.500" height="1.300" fill="#fff"/><rect x="1" y="17.0" width="1.500" height="1.300" fill="#fff"/><rect x="1" y="19.9" width="1.500" height="1.300" fill="#fff"/><rect x="1" y="22.8" width="1.500" height="1.300" fill="#fff"/><rect x="1" y="25.7" width="1.500" height="1.300" fill="#fff"/><rect x="38.500" y="6.5" width="1.500" height="1.300" fill="#fff"/><rect x="38.500" y="9.4" width="1.500" height="1.300" fill="#fff"/><rect x="38.500" y="12.3" width="1.500" height="1.300" fill="#fff"/><rect x="38.500" y="15.2" width="1.500" height="1.300" fill="#fff"/><rect x="38.500" y="18.1" width="1.500" height="1.300" fill="#fff"/><rect x="38.500" y="21.0" width="1.500" height="1.300" fill="#fff"/><rect x="38.500" y="23.9" width="1.500" height="1.300" fill="#fff"/><rect x="38.500" y="26.8" width="1.500" height="1.300" fill="#fff"/><rect x="38.500" y="29.7" width="1.500" height="1.300" fill="#fff"/></svg>
<svg style="left:2433px;top:370px" width="38" height="34" viewBox="0 0 38 34"><defs><linearGradient id="bin" x1="0" y1="0" x2="0" y2="1"><stop offset="0" stop-color="#d6f4ff"/><stop offset=".35" stop-color="#9ccaf0"/><stop offset=".75" stop-color="#78b0e6"/><stop offset="1" stop-color="#a8d4f4"/></linearGradient></defs><path d="M1 5.500Q17 -1.500 35.500 .5L31.500 28Q20 35 8 29.500Z" fill="url(#bin)"/><path d="M1 5.500Q17 -1.500 35.500 .5Q28 5 18 5.500T1 5.500Z" fill="#e2faff" opacity=".95"/><path d="M12 2.500Q24 .5 34 1.500Q26 5 17 5Z" fill="#8cc0ec" opacity=".8"/><ellipse cx="17.500" cy="27" rx="10.500" ry="4.500" fill="#cfeaf9" opacity=".9"/><path d="M35.500 .5L31.500 28" stroke="#6a7f96" stroke-width="1" opacity=".6"/><path d="M17.500 14a6.500 6.500 0 0 1 10 -3l2 -2.500l.5 7.500l-7 -.5l2 -2a3.500 3.500 0 0 0 -5 1.500z" fill="#0c9c1c"/><path d="M29.500 19a6.500 6.500 0 0 1 -10 3l-2 2.500l-.5 -7.500l7 .5l-2 2a3.500 3.500 0 0 0 5 -1.500z" fill="#0c9c1c"/></svg>
<svg style="left:2432px;top:411px" width="41" height="28" viewBox="0 0 41 28"><polygon points="0,28 0,14.5 2,13.5 3,12.5 3,28" fill="#000080"/><polygon points="3,28 3,12.5 5,11.5 5.5,9.2 5.5,28" fill="#ff00ff"/><polygon points="5.5,28 5.5,9.2 6,7.0 8,3.5 9,6.5 11,7.5 11,28" fill="#0000ff"/><polygon points="11,28 11,7.5 12,9.5 14,10.5 14,28" fill="#00ffff"/><polygon points="14,28 14,10.5 16,11.0 18,10.5 19,7.0 19,28" fill="#00ff00"/><polygon points="19,28 19,7.0 21,3.0 23,0.6 25,2.0 27,3.5 27.5,4.6 27.5,28" fill="#ffff00"/><polygon points="27.5,28 27.5,4.6 29,8.0 31,11.0 32,11.5 32,28" fill="#800000"/><polygon points="32,28 32,11.5 33,12.0 35,9.5 37,9.5 38,11.5 41,12.0 41,28" fill="#ff0000"/><polyline points="0,14.5 2,13.5 3,12.5 5,11.5 6,7 8,3.5 9,6.5 11,7.5 12,9.5 14,10.5 16,11 18,10.5 19,7 21,3 23,0.6 25,2 27,3.5 29,8 31,11 33,12 35,9.5 37,9.5 38,11.5 41,12" fill="none" stroke="#ffff00" stroke-width="1"/></svg>
<div style="left:2432.5px;top:447.5px;width:70px;height:22.5px;background:#f0f0f0;"></div>
<div style="left:2434.5px;top:451px;width:13.5px;height:14px;background:#fff;"></div>
<div style="left:2434.5px;top:451px;width:13.5px;height:1px;background:#828282;"></div>
<div style="left:2434.5px;top:451px;width:1px;height:14px;background:#828282;"></div>
<div style="left:2435.5px;top:452px;width:11.5px;height:1px;background:#696969;"></div>
<div style="left:2435.5px;top:452px;width:1px;height:12px;background:#696969;"></div>
<div style="left:2434.5px;top:464px;width:13.5px;height:1px;background:#fff;"></div>
<div style="left:2447.0px;top:451px;width:1px;height:14px;background:#fff;"></div>
<div style="left:2435.5px;top:463px;width:11.5px;height:1px;background:#e3e3e3;"></div>
<div style="left:2446.0px;top:452px;width:1px;height:12px;background:#e3e3e3;"></div>
<span style="left:2456.25px;top:450px;font:400 15.5px/15.5px 'Liberation Sans',sans-serif;color:#111;white-space:pre;transform-origin:0 0;transform:scaleX(1.1045);">Edit</span>
<div style="left:3px;top:199px;width:2420px;height:275.5px;background:#fdfdfd;"></div>
<div style="left:2420.5px;top:199px;width:2.5px;height:275.5px;background:#dcdcdc;"></div>
<div style="left:2423px;top:199px;width:2px;height:276px;background:#7c7c7c;"></div>
<div style="left:7px;top:202.8px;width:2413.5px;height:269.2px;background:#2cd42c;border-radius:5px 5px 0 0;"></div>
<div style="left:8.5px;top:204px;width:2410.5px;height:266.2px;background:#ebebeb;border-radius:4px 4px 0 0;"></div>
<div style="left:8.5px;top:204px;width:2410.5px;height:20px;background:linear-gradient(90deg,#e6ecf6,#edf1f9);border-radius:4px 4px 0 0;"></div>
<div style="left:13px;top:202.8px;width:2402px;height:1.3px;background:#a4a4a4;"></div>
<div style="left:8.5px;top:224px;width:2410.5px;height:1.5px;background:#2cd42c;"></div>
<span style="left:18.00px;top:209px;font:700 12.5px/12.5px 'Liberation Sans',sans-serif;color:#3c3c3c;white-space:pre;transform-origin:0 0;transform:scaleX(1.1016);">( Average dE: 0.48 [0.29,0.36,0.00] max: 0.80 [CIE2000] ) [Absolute Y w/gamma]</span>
<div style="left:10px;top:220.5px;width:2387.5px;height:246.5px;background:#f0f0f0;"></div>
<div style="left:10px;top:220.5px;width:2386.5px;height:2.5px;background:#7a7a7a;"></div>
<div style="left:10px;top:220.5px;width:2px;height:246.5px;background:#7a7a7a;"></div>
<div style="left:2395.5px;top:220.5px;width:2px;height:246.5px;background:#fbfbfb;"></div>
<div style="left:10px;top:465.5px;width:2387.5px;height:1.5px;background:#fbfbfb;"></div>
<div style="left:82.5px;top:223px;width:456.5px;height:27px;background:#828282;"></div>
<div style="left:538.0px;top:223px;width:1.3px;height:28.5px;background:#7a7a7a;"></div>
<div style="left:539.3px;top:223px;width:1px;height:27px;background:#f4f4f4;"></div>
<div style="left:82.0px;top:249.8px;width:458.5px;height:1.5px;background:#7a7a7a;"></div>
<span style="left:302.59px;top:229px;font:700 16.3px/16.3px 'Liberation Sans',sans-serif;color:#1a1a1a;white-space:pre;transform-origin:0 0;transform:scaleX(0.9000);">96</span>
<div style="left:541.0px;top:223px;width:456.5px;height:27px;background:#9b9b9b;"></div>
<div style="left:996.5px;top:223px;width:1.3px;height:28.5px;background:#7a7a7a;"></div>
<div style="left:997.8px;top:223px;width:1px;height:27px;background:#f4f4f4;"></div>
<div style="left:540.5px;top:249.8px;width:458.5px;height:1.5px;background:#7a7a7a;"></div>
<span style="left:761.09px;top:229px;font:700 16.3px/16.3px 'Liberation Sans',sans-serif;color:#1a1a1a;white-space:pre;transform-origin:0 0;transform:scaleX(0.9000);">97</span>
<div style="left:999.5px;top:223px;width:456.5px;height:27px;background:#b4b4b4;"></div>
<div style="left:1455.0px;top:223px;width:1.3px;height:28.5px;background:#7a7a7a;"></div>
<div style="left:1456.3px;top:223px;width:1px;height:27px;background:#f4f4f4;"></div>
<div style="left:999.0px;top:249.8px;width:458.5px;height:1.5px;background:#7a7a7a;"></div>
<span style="left:1219.59px;top:229px;font:700 16.3px/16.3px 'Liberation Sans',sans-serif;color:#1a1a1a;white-space:pre;transform-origin:0 0;transform:scaleX(0.9000);">98</span>
<div style="left:1458.0px;top:223px;width:456.5px;height:27px;background:#cacaca;"></div>
<div style="left:1913.5px;top:223px;width:1.3px;height:28.5px;background:#7a7a7a;"></div>
<div style="left:1914.8px;top:223px;width:1px;height:27px;background:#f4f4f4;"></div>
<div style="left:1457.5px;top:249.8px;width:458.5px;height:1.5px;background:#7a7a7a;"></div>
<span style="left:1678.09px;top:229px;font:700 16.3px/16.3px 'Liberation Sans',sans-serif;color:#1a1a1a;white-space:pre;transform-origin:0 0;transform:scaleX(0.9000);">99</span>
<div style="left:1916.5px;top:223px;width:456.5px;height:27px;background:#e1e1e1;"></div>
<div style="left:2372.0px;top:223px;width:1.3px;height:28.5px;background:#7a7a7a;"></div>
<div style="left:2373.3px;top:223px;width:1px;height:27px;background:#f4f4f4;"></div>
<div style="left:1916.0px;top:249.8px;width:458.5px;height:1.5px;background:#7a7a7a;"></div>
<span style="left:2132.51px;top:229px;font:700 16.3px/16.3px 'Liberation Sans',sans-serif;color:#1a1a1a;white-space:pre;transform-origin:0 0;transform:scaleX(0.9000);">100</span>
<div style="left:81.5px;top:251.5px;width:2291.5px;height:32.0px;background:#fff;"></div>
<div style="left:81.5px;top:282.5px;width:2291.5px;height:1.2px;background:#c6c6c6;"></div>
<div style="left:538.4px;top:251.5px;width:1.1px;height:32.0px;background:#c6c6c6;"></div>
<span style="left:496.30px;top:260px;font:400 16.5px/16.5px 'Liberation Sans',sans-serif;color:#1c1c1c;white-space:pre;transform-origin:0 0;transform:scaleX(0.8223);">0.3127</span>
<div style="left:996.9px;top:251.5px;width:1.1px;height:32.0px;background:#c6c6c6;"></div>
<span style="left:954.80px;top:260px;font:400 16.5px/16.5px 'Liberation Sans',sans-serif;color:#1c1c1c;white-space:pre;transform-origin:0 0;transform:scaleX(0.8223);">0.3128</span>
<div style="left:1455.4px;top:251.5px;width:1.1px;height:32.0px;background:#c6c6c6;"></div>
<span style="left:1413.30px;top:260px;font:400 16.5px/16.5px 'Liberation Sans',sans-serif;color:#1c1c1c;white-space:pre;transform-origin:0 0;transform:scaleX(0.8223);">0.3129</span>
<div style="left:1913.9px;top:251.5px;width:1.1px;height:32.0px;background:#c6c6c6;"></div>
<span style="left:1871.80px;top:260px;font:400 16.5px/16.5px 'Liberation Sans',sans-serif;color:#1c1c1c;white-space:pre;transform-origin:0 0;transform:scaleX(0.8223);">0.3128</span>
<div style="left:2372.4px;top:251.5px;width:1.1px;height:32.0px;background:#c6c6c6;"></div>
<span style="left:2330.30px;top:260px;font:400 16.5px/16.5px 'Liberation Sans',sans-serif;color:#1c1c1c;white-space:pre;transform-origin:0 0;transform:scaleX(0.8223);">0.3126</span>
<div style="left:81.5px;top:283.5px;width:2291.5px;height:32.30000000000001px;background:#fff;"></div>
<div style="left:81.5px;top:314.8px;width:2291.5px;height:1.2px;background:#c6c6c6;"></div>
<div style="left:538.4px;top:283.5px;width:1.1px;height:32.30000000000001px;background:#c6c6c6;"></div>
<span style="left:496.30px;top:292px;font:400 16.5px/16.5px 'Liberation Sans',sans-serif;color:#1c1c1c;white-space:pre;transform-origin:0 0;transform:scaleX(0.8223);">0.3292</span>
<div style="left:996.9px;top:283.5px;width:1.1px;height:32.30000000000001px;background:#c6c6c6;"></div>
<span style="left:954.80px;top:292px;font:400 16.5px/16.5px 'Liberation Sans',sans-serif;color:#1c1c1c;white-space:pre;transform-origin:0 0;transform:scaleX(0.8223);">0.3295</span>
<div style="left:1455.4px;top:283.5px;width:1.1px;height:32.30000000000001px;background:#c6c6c6;"></div>
<span style="left:1413.30px;top:292px;font:400 16.5px/16.5px 'Liberation Sans',sans-serif;color:#1c1c1c;white-space:pre;transform-origin:0 0;transform:scaleX(0.8223);">0.3297</span>
<div style="left:1913.9px;top:283.5px;width:1.1px;height:32.30000000000001px;background:#c6c6c6;"></div>
<span style="left:1871.80px;top:292px;font:400 16.5px/16.5px 'Liberation Sans',sans-serif;color:#1c1c1c;white-space:pre;transform-origin:0 0;transform:scaleX(0.8223);">0.3296</span>
<div style="left:2372.4px;top:283.5px;width:1.1px;height:32.30000000000001px;background:#c6c6c6;"></div>
<span style="left:2330.30px;top:292px;font:400 16.5px/16.5px 'Liberation Sans',sans-serif;color:#1c1c1c;white-space:pre;transform-origin:0 0;transform:scaleX(0.8223);">0.3292</span>
<div style="left:81.5px;top:315.8px;width:2291.5px;height:32.39999999999998px;background:#fff;"></div>
<div style="left:81.5px;top:347.2px;width:2291.5px;height:1.2px;background:#c6c6c6;"></div>
<div style="left:538.4px;top:315.8px;width:1.1px;height:32.39999999999998px;background:#c6c6c6;"></div>
<span style="left:489.30px;top:325px;font:400 16.5px/16.5px 'Liberation Sans',sans-serif;color:#1c1c1c;white-space:pre;transform-origin:0 0;transform:scaleX(0.8131);">109.626</span>
<div style="left:996.9px;top:315.8px;width:1.1px;height:32.39999999999998px;background:#c6c6c6;"></div>
<span style="left:947.80px;top:325px;font:400 16.5px/16.5px 'Liberation Sans',sans-serif;color:#1c1c1c;white-space:pre;transform-origin:0 0;transform:scaleX(0.8480);">111.408</span>
<div style="left:1455.4px;top:315.8px;width:1.1px;height:32.39999999999998px;background:#c6c6c6;"></div>
<span style="left:1406.30px;top:325px;font:400 16.5px/16.5px 'Liberation Sans',sans-serif;color:#1c1c1c;white-space:pre;transform-origin:0 0;transform:scaleX(0.8302);">118.668</span>
<div style="left:1913.9px;top:315.8px;width:1.1px;height:32.39999999999998px;background:#c6c6c6;"></div>
<span style="left:1864.80px;top:325px;font:400 16.5px/16.5px 'Liberation Sans',sans-serif;color:#1c1c1c;white-space:pre;transform-origin:0 0;transform:scaleX(0.8131);">120.339</span>
<div style="left:2372.4px;top:315.8px;width:1.1px;height:32.39999999999998px;background:#c6c6c6;"></div>
<span style="left:2323.30px;top:325px;font:400 16.5px/16.5px 'Liberation Sans',sans-serif;color:#1c1c1c;white-space:pre;transform-origin:0 0;transform:scaleX(0.8131);">121.964</span>
<div style="left:81.5px;top:348.2px;width:2291.5px;height:32.30000000000001px;background:#b0fdaa;"></div>
<div style="left:81.5px;top:379.5px;width:2291.5px;height:1.2px;background:#c6c6c6;"></div>
<div style="left:538.4px;top:348.2px;width:1.1px;height:32.30000000000001px;background:#c6c6c6;"></div>
<span style="left:516.80px;top:357px;font:700 16.5px/16.5px 'Liberation Sans',sans-serif;color:#1c1c1c;white-space:pre;transform-origin:0 0;transform:scaleX(0.9155);">0.2</span>
<div style="left:996.9px;top:348.2px;width:1.1px;height:32.30000000000001px;background:#c6c6c6;"></div>
<span style="left:975.30px;top:357px;font:700 16.5px/16.5px 'Liberation Sans',sans-serif;color:#1c1c1c;white-space:pre;transform-origin:0 0;transform:scaleX(0.9155);">0.5</span>
<div style="left:1455.4px;top:348.2px;width:1.1px;height:32.30000000000001px;background:#c6c6c6;"></div>
<span style="left:1433.80px;top:357px;font:700 16.5px/16.5px 'Liberation Sans',sans-serif;color:#1c1c1c;white-space:pre;transform-origin:0 0;transform:scaleX(0.9155);">0.8</span>
<div style="left:1913.9px;top:348.2px;width:1.1px;height:32.30000000000001px;background:#c6c6c6;"></div>
<span style="left:1892.30px;top:357px;font:700 16.5px/16.5px 'Liberation Sans',sans-serif;color:#1c1c1c;white-space:pre;transform-origin:0 0;transform:scaleX(0.9155);">0.7</span>
<div style="left:2372.4px;top:348.2px;width:1.1px;height:32.30000000000001px;background:#c6c6c6;"></div>
<span style="left:2350.80px;top:357px;font:700 16.5px/16.5px 'Liberation Sans',sans-serif;color:#1c1c1c;white-space:pre;transform-origin:0 0;transform:scaleX(0.9155);">0.2</span>
<div style="left:81.5px;top:380.5px;width:2291.5px;height:31.5px;background:#f0f0f0;"></div>
<div style="left:81.5px;top:411px;width:2291.5px;height:1.2px;background:#c6c6c6;"></div>
<div style="left:538.4px;top:380.5px;width:1.1px;height:31.5px;background:#c6c6c6;"></div>
<span style="left:496.30px;top:389px;font:400 16.5px/16.5px 'Liberation Sans',sans-serif;color:#1c1c1c;white-space:pre;transform-origin:0 0;transform:scaleX(0.8223);">0.0002</span>
<div style="left:996.9px;top:380.5px;width:1.1px;height:31.5px;background:#c6c6c6;"></div>
<span style="left:954.80px;top:389px;font:400 16.5px/16.5px 'Liberation Sans',sans-serif;color:#1c1c1c;white-space:pre;transform-origin:0 0;transform:scaleX(0.8223);">0.0005</span>
<div style="left:1455.4px;top:380.5px;width:1.1px;height:31.5px;background:#c6c6c6;"></div>
<span style="left:1413.30px;top:389px;font:400 16.5px/16.5px 'Liberation Sans',sans-serif;color:#1c1c1c;white-space:pre;transform-origin:0 0;transform:scaleX(0.8223);">0.0007</span>
<div style="left:1913.9px;top:380.5px;width:1.1px;height:31.5px;background:#c6c6c6;"></div>
<span style="left:1871.80px;top:389px;font:400 16.5px/16.5px 'Liberation Sans',sans-serif;color:#1c1c1c;white-space:pre;transform-origin:0 0;transform:scaleX(0.8223);">0.0006</span>
<div style="left:2372.4px;top:380.5px;width:1.1px;height:31.5px;background:#c6c6c6;"></div>
<span style="left:2330.30px;top:389px;font:400 16.5px/16.5px 'Liberation Sans',sans-serif;color:#1c1c1c;white-space:pre;transform-origin:0 0;transform:scaleX(0.8223);">0.0002</span>
<div style="left:81.5px;top:412px;width:2291.5px;height:31.5px;background:#e0e0e0;"></div>
<div style="left:81.5px;top:442.5px;width:2291.5px;height:1.2px;background:#c6c6c6;"></div>
<div style="left:538.4px;top:412px;width:1.1px;height:31.5px;background:#c6c6c6;"></div>
<span style="left:489.30px;top:420px;font:400 16.5px/16.5px 'Liberation Sans',sans-serif;color:#1c1c1c;white-space:pre;transform-origin:0 0;transform:scaleX(0.8302);">110.252</span>
<div style="left:996.9px;top:412px;width:1.1px;height:31.5px;background:#c6c6c6;"></div>
<span style="left:947.80px;top:420px;font:400 16.5px/16.5px 'Liberation Sans',sans-serif;color:#1c1c1c;white-space:pre;transform-origin:0 0;transform:scaleX(0.8302);">112.788</span>
<div style="left:1455.4px;top:412px;width:1.1px;height:31.5px;background:#c6c6c6;"></div>
<span style="left:1406.30px;top:420px;font:400 16.5px/16.5px 'Liberation Sans',sans-serif;color:#1c1c1c;white-space:pre;transform-origin:0 0;transform:scaleX(0.8302);">115.359</span>
<div style="left:1913.9px;top:412px;width:1.1px;height:31.5px;background:#c6c6c6;"></div>
<span style="left:1864.80px;top:420px;font:400 16.5px/16.5px 'Liberation Sans',sans-serif;color:#1c1c1c;white-space:pre;transform-origin:0 0;transform:scaleX(0.8302);">117.963</span>
<div style="left:2372.4px;top:412px;width:1.1px;height:31.5px;background:#c6c6c6;"></div>
<span style="left:2323.30px;top:420px;font:400 16.5px/16.5px 'Liberation Sans',sans-serif;color:#1c1c1c;white-space:pre;transform-origin:0 0;transform:scaleX(0.8131);">121.933</span>
<div style="left:12px;top:223px;width:68.5px;height:28.5px;background:#f0f0f0;"></div>
<div style="left:12px;top:223px;width:68px;height:1.2px;background:#fff;"></div>
<div style="left:12px;top:223px;width:1.2px;height:28.5px;background:#fff;"></div>
<div style="left:12px;top:250.5px;width:69.5px;height:1.3px;background:#6e6e6e;"></div>
<div style="left:80px;top:223px;width:1.3px;height:28.5px;background:#6e6e6e;"></div>
<span style="left:17.22px;top:229px;font:700 16.3px/16.3px 'Liberation Sans',sans-serif;color:#111;white-space:pre;transform-origin:0 0;transform:scaleX(0.9333);">% White</span>
<div style="left:12px;top:251.5px;width:68.5px;height:32.0px;background:#f0f0f0;"></div>
<div style="left:12px;top:251.5px;width:68px;height:1.2px;background:#fff;"></div>
<div style="left:12px;top:251.5px;width:1.2px;height:32.0px;background:#fff;"></div>
<div style="left:12px;top:282.5px;width:69.5px;height:1.3px;background:#6e6e6e;"></div>
<div style="left:80px;top:251.5px;width:1.3px;height:32.0px;background:#6e6e6e;"></div>
<span style="left:42.46px;top:258px;font:700 16.3px/16.3px 'Liberation Sans',sans-serif;color:#111;white-space:pre;transform-origin:0 0;transform:scaleX(0.9564);">x</span>
<div style="left:12px;top:283.5px;width:68.5px;height:32.30000000000001px;background:#f0f0f0;"></div>
<div style="left:12px;top:283.5px;width:68px;height:1.2px;background:#fff;"></div>
<div style="left:12px;top:283.5px;width:1.2px;height:32.30000000000001px;background:#fff;"></div>
<div style="left:12px;top:314.8px;width:69.5px;height:1.3px;background:#6e6e6e;"></div>
<div style="left:80px;top:283.5px;width:1.3px;height:32.30000000000001px;background:#6e6e6e;"></div>
<span style="left:42.46px;top:290px;font:700 16.3px/16.3px 'Liberation Sans',sans-serif;color:#111;white-space:pre;transform-origin:0 0;transform:scaleX(0.9564);">y</span>
<div style="left:12px;top:315.8px;width:68.5px;height:32.39999999999998px;background:#f0f0f0;"></div>
<div style="left:12px;top:315.8px;width:68px;height:1.2px;background:#fff;"></div>
<div style="left:12px;top:315.8px;width:1.2px;height:32.39999999999998px;background:#fff;"></div>
<div style="left:12px;top:347.2px;width:69.5px;height:1.3px;background:#6e6e6e;"></div>
<div style="left:80px;top:315.8px;width:1.3px;height:32.39999999999998px;background:#6e6e6e;"></div>
<span style="left:41.70px;top:322px;font:700 16.3px/16.3px 'Liberation Sans',sans-serif;color:#111;white-space:pre;transform-origin:0 0;transform:scaleX(0.9381);">Y</span>
<div style="left:12px;top:348.2px;width:68.5px;height:32.30000000000001px;background:#f0f0f0;"></div>
<div style="left:12px;top:348.2px;width:68px;height:1.2px;background:#fff;"></div>
<div style="left:12px;top:348.2px;width:1.2px;height:32.30000000000001px;background:#fff;"></div>
<div style="left:12px;top:379.5px;width:69.5px;height:1.3px;background:#6e6e6e;"></div>
<div style="left:80px;top:348.2px;width:1.3px;height:32.30000000000001px;background:#6e6e6e;"></div>
<span style="left:22.06px;top:355px;font:700 16.3px/16.3px 'Liberation Sans',sans-serif;color:#111;white-space:pre;transform-origin:0 0;transform:scaleX(0.8952);">Delta E</span>
<div style="left:12px;top:380.5px;width:68.5px;height:31.5px;background:#f0f0f0;"></div>
<div style="left:12px;top:380.5px;width:68px;height:1.2px;background:#fff;"></div>
<div style="left:12px;top:380.5px;width:1.2px;height:31.5px;background:#fff;"></div>
<div style="left:12px;top:411px;width:69.5px;height:1.3px;background:#6e6e6e;"></div>
<div style="left:80px;top:380.5px;width:1.3px;height:31.5px;background:#6e6e6e;"></div>
<span style="left:18.75px;top:387px;font:700 16.3px/16.3px 'Liberation Sans',sans-serif;color:#111;white-space:pre;transform-origin:0 0;transform:scaleX(0.9241);">delta xy</span>
<div style="left:12px;top:412px;width:68.5px;height:31.5px;background:#f0f0f0;"></div>
<div style="left:12px;top:412px;width:68px;height:1.2px;background:#fff;"></div>
<div style="left:12px;top:412px;width:1.2px;height:31.5px;background:#fff;"></div>
<div style="left:12px;top:442.5px;width:69.5px;height:1.3px;background:#6e6e6e;"></div>
<div style="left:80px;top:412px;width:1.3px;height:31.5px;background:#6e6e6e;"></div>
<span style="left:18.24px;top:418px;font:700 16.3px/16.3px 'Liberation Sans',sans-serif;color:#111;white-space:pre;transform-origin:0 0;transform:scaleX(0.9458);">Y target</span>
<div style="left:2374px;top:223px;width:21.5px;height:220.5px;background:#f0f0f0;"></div>
<div style="left:12px;top:443.5px;width:2383.5px;height:22.5px;background:#f0f0f0;"></div>
<svg style="left:0;top:0" width="2560" height="1440"><polygon points="2379.9,237.70000000000002 2390.1,237.70000000000002 2385,229.9" fill="#a3a3a3"/></svg>
<svg style="left:0;top:0" width="2560" height="1440"><polygon points="2379.9,430.1 2390.1,430.1 2385,437.9" fill="#a3a3a3"/></svg>
<svg style="left:0;top:0" width="2560" height="1440"><polygon points="18.300,455 27,450 27,460" fill="#a3a3a3"/><polygon points="2368,455 2360,450 2360,460" fill="#a3a3a3"/></svg>
<div style="left:7px;top:484px;width:471px;height:862.5px;background:#9c9c9c;"></div>
<div style="left:8.5px;top:485.5px;width:468px;height:859.5px;background:#ececec;border-radius:4px 4px 0 0;"></div>
<div style="left:8.5px;top:485.5px;width:468px;height:20.5px;background:linear-gradient(90deg,#e3e9f4,#edf1f8);border-radius:4px 4px 0 0;"></div>
<div style="left:8.5px;top:506.0px;width:468px;height:1.5px;background:#a9a9a9;"></div>
<span style="left:15.00px;top:489px;font:700 14.5px/14.5px 'Liberation Sans',sans-serif;color:#3c3c3c;white-space:pre;transform-origin:0 0;transform:scaleX(1.1703);">Selected color</span>
<div style="left:18.3px;top:511.7px;width:141px;height:17.5px;background:#f0f0f0;"></div>
<span style="left:22.70px;top:513px;font:400 15.5px/15.5px 'Liberation Sans',sans-serif;color:#111;white-space:pre;transform-origin:0 0;transform:scaleX(1.0351);">RGB Levels</span>
<div style="left:287.3px;top:510px;width:159.4px;height:17px;background:#f0f0f0;"></div>
<span style="left:301.70px;top:510px;font:400 15.5px/15.5px 'Liberation Sans',sans-serif;color:#111;white-space:pre;transform-origin:0 0;transform:scaleX(1.1316);">Current Measure</span>
<div style="left:17.3px;top:541px;width:250.4px;height:107.3px;background:#f0f0f0;"></div>
<svg style="left:17px;top:596px" width="251" height="2"><path d="M0 1H251" stroke="#a2a2a2" stroke-width="1.3" stroke-dasharray="3.800 3.700"/></svg>
<span style="left:27.70px;top:616px;font:700 18.5px/18.5px 'Liberation Serif',serif;color:#111;white-space:pre;transform-origin:0 0;transform:scaleX(0.9754);">0.0%</span>
<span style="left:91.00px;top:616px;font:700 18.5px/18.5px 'Liberation Serif',serif;color:#111;white-space:pre;transform-origin:0 0;transform:scaleX(0.9922);">0.0%</span>
<span style="left:155.00px;top:616px;font:700 18.5px/18.5px 'Liberation Serif',serif;color:#111;white-space:pre;transform-origin:0 0;transform:scaleX(0.9850);">0.0%</span>
<span style="left:213.30px;top:616px;font:700 18.5px/18.5px 'Liberation Serif',serif;color:#111;white-space:pre;transform-origin:0 0;transform:scaleX(1.0600);">dE 0.0</span>
<svg style="left:17.300px;top:636px" width="250.400" height="13" viewBox="0 0 250.400 13"><ellipse cx="32.2" cy="8" rx="31.5" ry="7.400" fill="#b00000" stroke="#000" stroke-width="1.1"/><ellipse cx="96.2" cy="8" rx="30.5" ry="7.400" fill="#00a000" stroke="#000" stroke-width="1.1"/><ellipse cx="160.2" cy="8" rx="30.5" ry="7.400" fill="#0000b0" stroke="#000" stroke-width="1.1"/><ellipse cx="221.7" cy="8" rx="29.0" ry="7.400" fill="#b88800" stroke="#000" stroke-width="1.1"/><rect x="0" y="7.300" width="250.400" height="5.700" fill="#000"/></svg>
<div style="left:20px;top:665.7px;width:240px;height:92.6px;background:#f0f0f0;"></div>
<span style="left:44.40px;top:669px;font:700 16.5px/16.5px 'Liberation Sans',sans-serif;color:#000;white-space:pre;transform-origin:0 0;transform:scaleX(1.0425);">Measure</span>
<span style="left:159.30px;top:669px;font:700 16.5px/16.5px 'Liberation Sans',sans-serif;color:#000;white-space:pre;transform-origin:0 0;transform:scaleX(1.0113);">Reference</span>
<span style="left:22.70px;top:779px;font:400 15.5px/15.5px 'Liberation Sans',sans-serif;color:#111;white-space:pre;transform-origin:0 0;transform:scaleX(1.1374);">Target</span>
<div style="left:62.7px;top:798px;width:144.4px;height:110.7px;background:conic-gradient(from 0deg at 50% 50%,#48ff00 0deg,#a8e400 30deg,#e8cc00 45deg,#ffb400 53deg,#ff5000 70deg,#ff0000 90deg,#ff0048 110deg,#ff0090 127deg,#c800b0 150deg,#9000c8 180deg,#4000e8 210deg,#0000ff 233deg,#0048e0 250deg,#0090a8 270deg,#00c890 290deg,#00ff70 307deg,#10ff30 335deg,#48ff00 360deg);border:1px solid #1c1c1c;"></div>
<svg style="left:62px;top:798px" width="146" height="111" viewBox="62 798 146 111"><rect x="84.500" y="814.400" width="100.800" height="78.300" rx="9" fill="#000" stroke="#fff" stroke-width="1.1"/><g stroke="#f4f4f4" stroke-width="1.2" fill="none" stroke-dasharray="3.800 3.400"><path d="M81 853.300H190M135.600 814V892.700"/><ellipse cx="135.600" cy="853.300" rx="26.700" ry="20.300"/></g></svg>
<div style="left:276.7px;top:538.3px;width:188.8px;height:798.7px;background:#f0f0f0;"></div>
<div style="left:276.7px;top:538.3px;width:188.8px;height:1px;background:#828282;"></div>
<div style="left:276.7px;top:538.3px;width:1px;height:798.7px;background:#828282;"></div>
<div style="left:277.7px;top:539.3px;width:186.8px;height:1px;background:#696969;"></div>
<div style="left:277.7px;top:539.3px;width:1px;height:796.7px;background:#696969;"></div>
<div style="left:276.7px;top:1336.0px;width:188.8px;height:1px;background:#fff;"></div>
<div style="left:464.5px;top:538.3px;width:1px;height:798.7px;background:#fff;"></div>
<div style="left:277.7px;top:1335.0px;width:186.8px;height:1px;background:#e3e3e3;"></div>
<div style="left:463.5px;top:539.3px;width:1px;height:796.7px;background:#e3e3e3;"></div>
<div style="left:343.3px;top:539.5px;width:100px;height:28.77px;background:#fff;"></div>
<div style="left:343.3px;top:567.27px;width:100px;height:1px;background:#c8c8c8;"></div>
<div style="left:278.7px;top:539.5px;width:64.6px;height:28.77px;background:#f0f0f0;"></div>
<div style="left:278.7px;top:539.5px;width:64px;height:1px;background:#fff;"></div>
<div style="left:278.7px;top:567.0699999999999px;width:65px;height:1.2px;background:#6e6e6e;"></div>
<div style="left:342.3px;top:539.5px;width:1.2px;height:28.77px;background:#6e6e6e;"></div>
<span style="left:284.50px;top:546px;font:700 15px/15px 'Liberation Sans',sans-serif;color:#111;white-space:pre;transform-origin:0 0;transform:scaleX(0.9609);">Y cd/m</span>
<span style="left:332.00px;top:546px;font:700 9px/9px 'Liberation Sans',sans-serif;color:#111;white-space:pre;transform-origin:0 0;">2</span>
<div style="left:343.3px;top:568.27px;width:100px;height:28.77px;background:#fff;"></div>
<div style="left:343.3px;top:596.04px;width:100px;height:1px;background:#c8c8c8;"></div>
<div style="left:278.7px;top:568.27px;width:64.6px;height:28.77px;background:#f0f0f0;"></div>
<div style="left:278.7px;top:568.27px;width:64px;height:1px;background:#fff;"></div>
<div style="left:278.7px;top:595.8399999999999px;width:65px;height:1.2px;background:#6e6e6e;"></div>
<div style="left:342.3px;top:568.27px;width:1.2px;height:28.77px;background:#6e6e6e;"></div>
<span style="left:295.30px;top:575px;font:700 15px/15px 'Liberation Sans',sans-serif;color:#111;white-space:pre;transform-origin:0 0;transform:scaleX(0.9500);">Y ftL</span>
<div style="left:343.3px;top:597.04px;width:100px;height:28.77px;background:#fff;"></div>
<div style="left:343.3px;top:624.81px;width:100px;height:1px;background:#c8c8c8;"></div>
<div style="left:278.7px;top:597.04px;width:64.6px;height:28.77px;background:#f0f0f0;"></div>
<div style="left:278.7px;top:597.04px;width:64px;height:1px;background:#fff;"></div>
<div style="left:278.7px;top:624.6099999999999px;width:65px;height:1.2px;background:#6e6e6e;"></div>
<div style="left:342.3px;top:597.04px;width:1.2px;height:28.77px;background:#6e6e6e;"></div>
<span style="left:303.80px;top:604px;font:700 15px/15px 'Liberation Sans',sans-serif;color:#111;white-space:pre;transform-origin:0 0;transform:scaleX(0.9500);">T°</span>
<div style="left:343.3px;top:625.81px;width:100px;height:28.77px;background:#e0e0e0;"></div>
<div style="left:343.3px;top:653.5799999999999px;width:100px;height:1px;background:#c8c8c8;"></div>
<div style="left:278.7px;top:625.81px;width:64.6px;height:28.77px;background:#f0f0f0;"></div>
<div style="left:278.7px;top:625.81px;width:64px;height:1px;background:#fff;"></div>
<div style="left:278.7px;top:653.3799999999999px;width:65px;height:1.2px;background:#6e6e6e;"></div>
<div style="left:342.3px;top:625.81px;width:1.2px;height:28.77px;background:#6e6e6e;"></div>
<span style="left:306.25px;top:633px;font:700 15px/15px 'Liberation Sans',sans-serif;color:#111;white-space:pre;transform-origin:0 0;transform:scaleX(0.9500);">X</span>
<div style="left:343.3px;top:654.58px;width:100px;height:28.77px;background:#e0e0e0;"></div>
<div style="left:343.3px;top:682.35px;width:100px;height:1px;background:#c8c8c8;"></div>
<div style="left:278.7px;top:654.58px;width:64.6px;height:28.77px;background:#f0f0f0;"></div>
<div style="left:278.7px;top:654.58px;width:64px;height:1px;background:#fff;"></div>
<div style="left:278.7px;top:682.15px;width:65px;height:1.2px;background:#6e6e6e;"></div>
<div style="left:342.3px;top:654.58px;width:1.2px;height:28.77px;background:#6e6e6e;"></div>
<span style="left:306.25px;top:662px;font:700 15px/15px 'Liberation Sans',sans-serif;color:#111;white-space:pre;transform-origin:0 0;transform:scaleX(0.9500);">Y</span>
<div style="left:343.3px;top:683.35px;width:100px;height:28.77px;background:#e0e0e0;"></div>
<div style="left:343.3px;top:711.12px;width:100px;height:1px;background:#c8c8c8;"></div>
<div style="left:278.7px;top:683.35px;width:64.6px;height:28.77px;background:#f0f0f0;"></div>
<div style="left:278.7px;top:683.35px;width:64px;height:1px;background:#fff;"></div>
<div style="left:278.7px;top:710.92px;width:65px;height:1.2px;background:#6e6e6e;"></div>
<div style="left:342.3px;top:683.35px;width:1.2px;height:28.77px;background:#6e6e6e;"></div>
<span style="left:306.65px;top:690px;font:700 15px/15px 'Liberation Sans',sans-serif;color:#111;white-space:pre;transform-origin:0 0;transform:scaleX(0.9500);">Z</span>
<div style="left:343.3px;top:712.12px;width:100px;height:28.77px;background:#fff;"></div>
<div style="left:343.3px;top:739.89px;width:100px;height:1px;background:#c8c8c8;"></div>
<div style="left:278.7px;top:712.12px;width:64.6px;height:28.77px;background:#f0f0f0;"></div>
<div style="left:278.7px;top:712.12px;width:64px;height:1px;background:#fff;"></div>
<div style="left:278.7px;top:739.6899999999999px;width:65px;height:1.2px;background:#6e6e6e;"></div>
<div style="left:342.3px;top:712.12px;width:1.2px;height:28.77px;background:#6e6e6e;"></div>
<span style="left:305.85px;top:719px;font:700 15px/15px 'Liberation Sans',sans-serif;color:#111;white-space:pre;transform-origin:0 0;transform:scaleX(0.9500);">R</span>
<div style="left:343.3px;top:740.89px;width:100px;height:28.77px;background:#fff;"></div>
<div style="left:343.3px;top:768.66px;width:100px;height:1px;background:#c8c8c8;"></div>
<div style="left:278.7px;top:740.89px;width:64.6px;height:28.77px;background:#f0f0f0;"></div>
<div style="left:278.7px;top:740.89px;width:64px;height:1px;background:#fff;"></div>
<div style="left:278.7px;top:768.4599999999999px;width:65px;height:1.2px;background:#6e6e6e;"></div>
<div style="left:342.3px;top:740.89px;width:1.2px;height:28.77px;background:#6e6e6e;"></div>
<span style="left:305.46px;top:748px;font:700 15px/15px 'Liberation Sans',sans-serif;color:#111;white-space:pre;transform-origin:0 0;transform:scaleX(0.9500);">G</span>
<div style="left:343.3px;top:769.66px;width:100px;height:28.77px;background:#fff;"></div>
<div style="left:343.3px;top:797.43px;width:100px;height:1px;background:#c8c8c8;"></div>
<div style="left:278.7px;top:769.66px;width:64.6px;height:28.77px;background:#f0f0f0;"></div>
<div style="left:278.7px;top:769.66px;width:64px;height:1px;background:#fff;"></div>
<div style="left:278.7px;top:797.2299999999999px;width:65px;height:1.2px;background:#6e6e6e;"></div>
<div style="left:342.3px;top:769.66px;width:1.2px;height:28.77px;background:#6e6e6e;"></div>
<span style="left:305.85px;top:777px;font:700 15px/15px 'Liberation Sans',sans-serif;color:#111;white-space:pre;transform-origin:0 0;transform:scaleX(0.9500);">B</span>
<div style="left:343.3px;top:798.4300000000001px;width:100px;height:28.77px;background:#e0e0e0;"></div>
<div style="left:343.3px;top:826.2px;width:100px;height:1px;background:#c8c8c8;"></div>
<div style="left:278.7px;top:798.4300000000001px;width:64.6px;height:28.77px;background:#f0f0f0;"></div>
<div style="left:278.7px;top:798.4300000000001px;width:64px;height:1px;background:#fff;"></div>
<div style="left:278.7px;top:826.0px;width:65px;height:1.2px;background:#6e6e6e;"></div>
<div style="left:342.3px;top:798.4300000000001px;width:1.2px;height:28.77px;background:#6e6e6e;"></div>
<span style="left:307.04px;top:805px;font:700 15px/15px 'Liberation Sans',sans-serif;color:#111;white-space:pre;transform-origin:0 0;transform:scaleX(0.9500);">x</span>
<div style="left:343.3px;top:827.2px;width:100px;height:28.77px;background:#e0e0e0;"></div>
<div style="left:343.3px;top:854.97px;width:100px;height:1px;background:#c8c8c8;"></div>
<div style="left:278.7px;top:827.2px;width:64.6px;height:28.77px;background:#f0f0f0;"></div>
<div style="left:278.7px;top:827.2px;width:64px;height:1px;background:#fff;"></div>
<div style="left:278.7px;top:854.77px;width:65px;height:1.2px;background:#6e6e6e;"></div>
<div style="left:342.3px;top:827.2px;width:1.2px;height:28.77px;background:#6e6e6e;"></div>
<span style="left:307.04px;top:834px;font:700 15px/15px 'Liberation Sans',sans-serif;color:#111;white-space:pre;transform-origin:0 0;transform:scaleX(0.9500);">y</span>
<div style="left:343.3px;top:855.97px;width:100px;height:28.77px;background:#e0e0e0;"></div>
<div style="left:343.3px;top:883.74px;width:100px;height:1px;background:#c8c8c8;"></div>
<div style="left:278.7px;top:855.97px;width:64.6px;height:28.77px;background:#f0f0f0;"></div>
<div style="left:278.7px;top:855.97px;width:64px;height:1px;background:#fff;"></div>
<div style="left:278.7px;top:883.54px;width:65px;height:1.2px;background:#6e6e6e;"></div>
<div style="left:342.3px;top:855.97px;width:1.2px;height:28.77px;background:#6e6e6e;"></div>
<span style="left:306.25px;top:863px;font:700 15px/15px 'Liberation Sans',sans-serif;color:#111;white-space:pre;transform-origin:0 0;transform:scaleX(0.9500);">Y</span>
<div style="left:343.3px;top:884.74px;width:100px;height:28.77px;background:#fff;"></div>
<div style="left:343.3px;top:912.51px;width:100px;height:1px;background:#c8c8c8;"></div>
<div style="left:278.7px;top:884.74px;width:64.6px;height:28.77px;background:#f0f0f0;"></div>
<div style="left:278.7px;top:884.74px;width:64px;height:1px;background:#fff;"></div>
<div style="left:278.7px;top:912.31px;width:65px;height:1.2px;background:#6e6e6e;"></div>
<div style="left:342.3px;top:884.74px;width:1.2px;height:28.77px;background:#6e6e6e;"></div>
<span style="left:307.04px;top:892px;font:700 15px/15px 'Liberation Sans',sans-serif;color:#111;white-space:pre;transform-origin:0 0;transform:scaleX(0.9500);">x</span>
<div style="left:343.3px;top:913.51px;width:100px;height:28.77px;background:#fff;"></div>
<div style="left:343.3px;top:941.28px;width:100px;height:1px;background:#c8c8c8;"></div>
<div style="left:278.7px;top:913.51px;width:64.6px;height:28.77px;background:#f0f0f0;"></div>
<div style="left:278.7px;top:913.51px;width:64px;height:1px;background:#fff;"></div>
<div style="left:278.7px;top:941.0799999999999px;width:65px;height:1.2px;background:#6e6e6e;"></div>
<div style="left:342.3px;top:913.51px;width:1.2px;height:28.77px;background:#6e6e6e;"></div>
<span style="left:307.04px;top:921px;font:700 15px/15px 'Liberation Sans',sans-serif;color:#111;white-space:pre;transform-origin:0 0;transform:scaleX(0.9500);">y</span>
<div style="left:343.3px;top:942.28px;width:100px;height:28.77px;background:#fff;"></div>
<div style="left:343.3px;top:970.05px;width:100px;height:1px;background:#c8c8c8;"></div>
<div style="left:278.7px;top:942.28px;width:64.6px;height:28.77px;background:#f0f0f0;"></div>
<div style="left:278.7px;top:942.28px;width:64px;height:1px;background:#fff;"></div>
<div style="left:278.7px;top:969.8499999999999px;width:65px;height:1.2px;background:#6e6e6e;"></div>
<div style="left:342.3px;top:942.28px;width:1.2px;height:28.77px;background:#6e6e6e;"></div>
<span style="left:307.44px;top:949px;font:700 15px/15px 'Liberation Sans',sans-serif;color:#111;white-space:pre;transform-origin:0 0;transform:scaleX(0.9500);">z</span>
<div style="left:343.3px;top:971.05px;width:100px;height:28.77px;background:#e0e0e0;"></div>
<div style="left:343.3px;top:998.8199999999999px;width:100px;height:1px;background:#c8c8c8;"></div>
<div style="left:278.7px;top:971.05px;width:64.6px;height:28.77px;background:#f0f0f0;"></div>
<div style="left:278.7px;top:971.05px;width:64px;height:1px;background:#fff;"></div>
<div style="left:278.7px;top:998.6199999999999px;width:65px;height:1.2px;background:#6e6e6e;"></div>
<div style="left:342.3px;top:971.05px;width:1.2px;height:28.77px;background:#6e6e6e;"></div>
<span style="left:306.65px;top:978px;font:700 15px/15px 'Liberation Sans',sans-serif;color:#111;white-space:pre;transform-origin:0 0;transform:scaleX(0.9500);">L</span>
<div style="left:343.3px;top:999.8199999999999px;width:100px;height:28.77px;background:#e0e0e0;"></div>
<div style="left:343.3px;top:1027.59px;width:100px;height:1px;background:#c8c8c8;"></div>
<div style="left:278.7px;top:999.8199999999999px;width:64.6px;height:28.77px;background:#f0f0f0;"></div>
<div style="left:278.7px;top:999.8199999999999px;width:64px;height:1px;background:#fff;"></div>
<div style="left:278.7px;top:1027.3899999999999px;width:65px;height:1.2px;background:#6e6e6e;"></div>
<div style="left:342.3px;top:999.8199999999999px;width:1.2px;height:28.77px;background:#6e6e6e;"></div>
<span style="left:307.04px;top:1007px;font:700 15px/15px 'Liberation Sans',sans-serif;color:#111;white-space:pre;transform-origin:0 0;transform:scaleX(0.9500);">a</span>
<div style="left:343.3px;top:1028.59px;width:100px;height:28.77px;background:#e0e0e0;"></div>
<div style="left:343.3px;top:1056.36px;width:100px;height:1px;background:#c8c8c8;"></div>
<div style="left:278.7px;top:1028.59px;width:64.6px;height:28.77px;background:#f0f0f0;"></div>
<div style="left:278.7px;top:1028.59px;width:64px;height:1px;background:#fff;"></div>
<div style="left:278.7px;top:1056.1599999999999px;width:65px;height:1.2px;background:#6e6e6e;"></div>
<div style="left:342.3px;top:1028.59px;width:1.2px;height:28.77px;background:#6e6e6e;"></div>
<span style="left:306.65px;top:1036px;font:700 15px/15px 'Liberation Sans',sans-serif;color:#111;white-space:pre;transform-origin:0 0;transform:scaleX(0.9500);">b</span>
<div style="left:343.3px;top:1057.3600000000001px;width:100px;height:28.77px;background:#fff;"></div>
<div style="left:343.3px;top:1085.13px;width:100px;height:1px;background:#c8c8c8;"></div>
<div style="left:278.7px;top:1057.3600000000001px;width:64.6px;height:28.77px;background:#f0f0f0;"></div>
<div style="left:278.7px;top:1057.3600000000001px;width:64px;height:1px;background:#fff;"></div>
<div style="left:278.7px;top:1084.93px;width:65px;height:1.2px;background:#6e6e6e;"></div>
<div style="left:342.3px;top:1057.3600000000001px;width:1.2px;height:28.77px;background:#6e6e6e;"></div>
<span style="left:306.65px;top:1064px;font:700 15px/15px 'Liberation Sans',sans-serif;color:#111;white-space:pre;transform-origin:0 0;transform:scaleX(0.9500);">L</span>
<div style="left:343.3px;top:1086.13px;width:100px;height:28.77px;background:#fff;"></div>
<div style="left:343.3px;top:1113.9px;width:100px;height:1px;background:#c8c8c8;"></div>
<div style="left:278.7px;top:1086.13px;width:64.6px;height:28.77px;background:#f0f0f0;"></div>
<div style="left:278.7px;top:1086.13px;width:64px;height:1px;background:#fff;"></div>
<div style="left:278.7px;top:1113.7px;width:65px;height:1.2px;background:#6e6e6e;"></div>
<div style="left:342.3px;top:1086.13px;width:1.2px;height:28.77px;background:#6e6e6e;"></div>
<span style="left:305.85px;top:1093px;font:700 15px/15px 'Liberation Sans',sans-serif;color:#111;white-space:pre;transform-origin:0 0;transform:scaleX(0.9500);">C</span>
<div style="left:343.3px;top:1114.9px;width:100px;height:28.77px;background:#fff;"></div>
<div style="left:343.3px;top:1142.67px;width:100px;height:1px;background:#c8c8c8;"></div>
<div style="left:278.7px;top:1114.9px;width:64.6px;height:28.77px;background:#f0f0f0;"></div>
<div style="left:278.7px;top:1114.9px;width:64px;height:1px;background:#fff;"></div>
<div style="left:278.7px;top:1142.47px;width:65px;height:1.2px;background:#6e6e6e;"></div>
<div style="left:342.3px;top:1114.9px;width:1.2px;height:28.77px;background:#6e6e6e;"></div>
<span style="left:305.85px;top:1122px;font:700 15px/15px 'Liberation Sans',sans-serif;color:#111;white-space:pre;transform-origin:0 0;transform:scaleX(0.9500);">H</span>
<div style="left:343.3px;top:1143.67px;width:100px;height:28.77px;background:#e0e0e0;"></div>
<div style="left:343.3px;top:1171.44px;width:100px;height:1px;background:#c8c8c8;"></div>
<div style="left:278.7px;top:1143.67px;width:64.6px;height:28.77px;background:#f0f0f0;"></div>
<div style="left:278.7px;top:1143.67px;width:64px;height:1px;background:#fff;"></div>
<div style="left:278.7px;top:1171.24px;width:65px;height:1.2px;background:#6e6e6e;"></div>
<div style="left:342.3px;top:1143.67px;width:1.2px;height:28.77px;background:#6e6e6e;"></div>
<span style="left:306.65px;top:1151px;font:700 15px/15px 'Liberation Sans',sans-serif;color:#111;white-space:pre;transform-origin:0 0;transform:scaleX(0.9500);">L</span>
<div style="left:343.3px;top:1172.44px;width:100px;height:28.77px;background:#e0e0e0;"></div>
<div style="left:343.3px;top:1200.21px;width:100px;height:1px;background:#c8c8c8;"></div>
<div style="left:278.7px;top:1172.44px;width:64.6px;height:28.77px;background:#f0f0f0;"></div>
<div style="left:278.7px;top:1172.44px;width:64px;height:1px;background:#fff;"></div>
<div style="left:278.7px;top:1200.01px;width:65px;height:1.2px;background:#6e6e6e;"></div>
<div style="left:342.3px;top:1172.44px;width:1.2px;height:28.77px;background:#6e6e6e;"></div>
<span style="left:305.06px;top:1179px;font:700 15px/15px 'Liberation Sans',sans-serif;color:#111;white-space:pre;transform-origin:0 0;transform:scaleX(0.9500);">M</span>
<div style="left:343.3px;top:1201.21px;width:100px;height:28.77px;background:#e0e0e0;"></div>
<div style="left:343.3px;top:1228.98px;width:100px;height:1px;background:#c8c8c8;"></div>
<div style="left:278.7px;top:1201.21px;width:64.6px;height:28.77px;background:#f0f0f0;"></div>
<div style="left:278.7px;top:1201.21px;width:64px;height:1px;background:#fff;"></div>
<div style="left:278.7px;top:1228.78px;width:65px;height:1.2px;background:#6e6e6e;"></div>
<div style="left:342.3px;top:1201.21px;width:1.2px;height:28.77px;background:#6e6e6e;"></div>
<span style="left:306.25px;top:1208px;font:700 15px/15px 'Liberation Sans',sans-serif;color:#111;white-space:pre;transform-origin:0 0;transform:scaleX(0.9500);">S</span>
<div style="left:278.7px;top:1229.98px;width:164.6px;height:105.01999999999998px;background:#a0a0a0;"></div>
<div style="left:443.3px;top:540.3px;width:20.2px;height:794.7px;background:#f0f0f0;"></div>
<svg style="left:0;top:0" width="2560" height="1440"><polygon points="449.9,555.0999999999999 460.1,555.0999999999999 455,547.5" fill="#a3a3a3"/></svg>
<svg style="left:0;top:0" width="2560" height="1440"><polygon points="449.9,1322.2 460.1,1322.2 455,1329.8" fill="#a3a3a3"/></svg>
<div style="left:489px;top:484px;width:2039px;height:862.5px;background:#9c9c9c;"></div>
<div style="left:490.5px;top:485.5px;width:2036px;height:859.5px;background:#ececec;border-radius:4px 4px 0 0;"></div>
<div style="left:490.5px;top:485.5px;width:2036px;height:20.5px;background:linear-gradient(90deg,#e3e9f4,#edf1f8);border-radius:4px 4px 0 0;"></div>
<div style="left:490.5px;top:506.0px;width:2036px;height:1.5px;background:#a9a9a9;"></div>
<span style="left:498.00px;top:489px;font:700 14.5px/14.5px 'Liberation Sans',sans-serif;color:#3c3c3c;white-space:pre;transform-origin:0 0;transform:scaleX(1.2038);">Information</span>
<div style="left:495.2px;top:511.7px;width:376.5px;height:27px;background:#fff;"></div>
<div style="left:495.2px;top:511.7px;width:376.5px;height:1px;background:#828282;"></div>
<div style="left:495.2px;top:511.7px;width:1px;height:27px;background:#828282;"></div>
<div style="left:496.2px;top:512.7px;width:374.5px;height:1px;background:#696969;"></div>
<div style="left:496.2px;top:512.7px;width:1px;height:25px;background:#696969;"></div>
<div style="left:495.2px;top:537.7px;width:376.5px;height:1px;background:#fff;"></div>
<div style="left:870.7px;top:511.7px;width:1px;height:27px;background:#fff;"></div>
<div style="left:496.2px;top:536.7px;width:374.5px;height:1px;background:#e3e3e3;"></div>
<div style="left:869.7px;top:512.7px;width:1px;height:25px;background:#e3e3e3;"></div>
<span style="left:501.50px;top:520px;font:400 16px/16px 'Liberation Sans',sans-serif;color:#111;white-space:pre;transform-origin:0 0;transform:scaleX(1.0819);">NearBlack - NearWhite</span>
<div style="left:851.4px;top:515.2px;width:18.3px;height:21px;background:#f0f0f0;"></div>
<div style="left:851.4px;top:515.2px;width:18.3px;height:1px;background:#fff;"></div>
<div style="left:851.4px;top:515.2px;width:1px;height:21px;background:#fff;"></div>
<div style="left:851.4px;top:535.2px;width:18.3px;height:1px;background:#696969;"></div>
<div style="left:868.6999999999999px;top:515.2px;width:1px;height:21px;background:#696969;"></div>
<div style="left:852.4px;top:534.2px;width:16.3px;height:1px;background:#a0a0a0;"></div>
<div style="left:867.6999999999999px;top:516.2px;width:1px;height:19px;background:#a0a0a0;"></div>
<svg style="left:0;top:0" width="2560" height="1440"><polygon points="856.25,523.95 864.75,523.95 860.5,528.45" fill="#000"/></svg>
<div style="left:498.0px;top:549px;width:1013.5px;height:788.8px;background:#fff;"></div>
<div style="left:498.0px;top:549px;width:1009.5px;height:784.8px;background:linear-gradient(#a0a0a0,#707070 40%,#979797);"></div>
<div style="left:499.5px;top:551.5px;width:1007.5px;height:782.3px;background:#979797;"></div>
<svg style="left:502.5px;top:554px" width="1004.5" height="779.3" viewBox="502.5 554 1004.5 779.3"><defs><linearGradient id="lg" x1="0" y1="0" x2="1" y2="0"><stop offset="0" stop-color="#1f1f1f"/><stop offset="1" stop-color="#090909"/></linearGradient></defs><rect x="502.5" y="554" width="1004.5" height="779.3" fill="url(#lg)"/><path d="M754.1 554V1333.3M1005.4 554V1333.3M1256.7 554V1333.3M502.5 632.4H1507M502.5 710.3H1507M502.5 788.2H1507M502.5 866.1H1507M502.5 944.0H1507M502.5 1021.9H1507M502.5 1099.8H1507M502.5 1177.7H1507M502.5 1255.6H1507" stroke="#0a4040" stroke-width="1.3" fill="none"/><path d="M503.2 554V1333.3" stroke="#0a3c3c" stroke-width="1.4"/><polyline points="504.8,1327 731.3,1323.8 961.2,1319.3 1189.7,1308.5 1420,1293.2" fill="none" stroke="#ffff00" stroke-width="2.2"/><polyline points="504.8,1328.2 731.3,1325.0 961.2,1320.5 1189.7,1309.7 1420,1294.4" fill="none" stroke="#fff" stroke-width="1" stroke-dasharray="4 3" opacity=".8"/><rect x="499.8" y="1322" width="10" height="10" fill="#e4e4e4"/><rect x="726.3" y="1318.8" width="10" height="10" fill="#e4e4e4"/><rect x="956.2" y="1314.3" width="10" height="10" fill="#e4e4e4"/><rect x="1184.7" y="1303.5" width="10" height="10" fill="#e4e4e4"/><rect x="1415" y="1288.2" width="10" height="10" fill="#e4e4e4"/></svg>
<span style="left:505.50px;top:603px;font:400 25.5px/25.5px 'Liberation Serif',serif;color:#bebebe;white-space:pre;transform-origin:0 0;">0.9 cd m-2</span>
<span style="left:505.50px;top:681px;font:400 25.5px/25.5px 'Liberation Serif',serif;color:#bebebe;white-space:pre;transform-origin:0 0;">0.8 cd m-2</span>
<span style="left:505.50px;top:759px;font:400 25.5px/25.5px 'Liberation Serif',serif;color:#bebebe;white-space:pre;transform-origin:0 0;">0.7 cd m-2</span>
<span style="left:505.50px;top:837px;font:400 25.5px/25.5px 'Liberation Serif',serif;color:#bebebe;white-space:pre;transform-origin:0 0;">0.6 cd m-2</span>
<span style="left:505.50px;top:915px;font:400 25.5px/25.5px 'Liberation Serif',serif;color:#bebebe;white-space:pre;transform-origin:0 0;">0.5 cd m-2</span>
<span style="left:505.50px;top:992px;font:400 25.5px/25.5px 'Liberation Serif',serif;color:#bebebe;white-space:pre;transform-origin:0 0;">0.4 cd m-2</span>
<span style="left:505.50px;top:1070px;font:400 25.5px/25.5px 'Liberation Serif',serif;color:#bebebe;white-space:pre;transform-origin:0 0;">0.3 cd m-2</span>
<span style="left:505.50px;top:1148px;font:400 25.5px/25.5px 'Liberation Serif',serif;color:#bebebe;white-space:pre;transform-origin:0 0;">0.2 cd m-2</span>
<span style="left:505.50px;top:1226px;font:400 25.5px/25.5px 'Liberation Serif',serif;color:#bebebe;white-space:pre;transform-origin:0 0;">0.1 cd m-2</span>
<span style="left:877.50px;top:561px;font:700 13.5px/13.5px 'Liberation Sans',sans-serif;color:#cccc00;white-space:pre;transform-origin:0 0;transform:scaleX(1.0559);">Near Black Luminance Response</span>
<span style="left:756.60px;top:1305px;font:400 25.5px/25.5px 'Liberation Serif',serif;color:#bebebe;white-space:pre;transform-origin:0 0;">1% White</span>
<span style="left:1007.90px;top:1305px;font:400 25.5px/25.5px 'Liberation Serif',serif;color:#bebebe;white-space:pre;transform-origin:0 0;">2% White</span>
<span style="left:1259.20px;top:1305px;font:400 25.5px/25.5px 'Liberation Serif',serif;color:#bebebe;white-space:pre;transform-origin:0 0;">3% White</span>
<span style="left:1302.00px;top:1264px;font:700 19.5px/19.5px 'Liberation Sans',sans-serif;color:#5c5c5c;white-space:pre;transform-origin:0 0;transform:scaleX(1.0252);">hcfr.sourceforge.net</span>
<div style="left:1512.9px;top:549px;width:1014.4000000000001px;height:788.8px;background:#fff;"></div>
<div style="left:1512.9px;top:549px;width:1010.4000000000001px;height:784.8px;background:linear-gradient(#a0a0a0,#707070 40%,#979797);"></div>
<div style="left:1514.4px;top:551.5px;width:1008.4000000000001px;height:782.3px;background:#979797;"></div>
<svg style="left:1517.4px;top:554px" width="1005.4" height="779.3" viewBox="1517.4 554 1005.4 779.3"><defs><linearGradient id="rg" x1="0" y1="0" x2="1" y2="0"><stop offset="0" stop-color="#808080"/><stop offset="1" stop-color="#ffffff"/></linearGradient></defs><rect x="1517.4" y="554" width="1005.4" height="779.3" fill="url(#rg)"/><path d="M1685.5 554V1333.3M1853.1 554V1333.3M2020.7 554V1333.3M2188.3 554V1333.3M2355.9 554V1333.3M1517.4 605.4H2522.8M1517.4 709.4H2522.8M1517.4 813.4H2522.8M1517.4 917.4H2522.8M1517.4 1021.4H2522.8M1517.4 1125.4H2522.8M1517.4 1229.4H2522.8" stroke="#1e5252" stroke-width="1.8" fill="none"/><path d="M1518.4 554V1333.3" stroke="#1e5252" stroke-width="2"/><polyline points="1833.3,1228.4 1986.5,1032.6 2139.8,899 2292.1,762.8 2519.5,556.6" fill="none" stroke="#f4f4f4" stroke-width="1.1" stroke-dasharray="5 4" opacity=".9"/><rect x="1828.3" y="1223.4" width="10" height="10" fill="#e6e6e6"/><rect x="1981.5" y="1027.6" width="10" height="10" fill="#e6e6e6"/><rect x="2134.8" y="894" width="10" height="10" fill="#e6e6e6"/><rect x="2287.1" y="757.8" width="10" height="10" fill="#e6e6e6"/><rect x="2514.5" y="551.6" width="10" height="10" fill="#e6e6e6"/><polyline points="1833.3,1196.1 1986.5,1103.4 2139.8,726.3 2292.1,640.2 2519.5,556.6" fill="none" stroke="#ffff00" stroke-width="2.4"/><rect x="1828.3" y="1191.1" width="10" height="10" fill="#ffff00"/><rect x="1981.5" y="1098.4" width="10" height="10" fill="#ffff00"/><rect x="2134.8" y="721.3" width="10" height="10" fill="#ffff00"/><rect x="2287.1" y="635.2" width="10" height="10" fill="#ffff00"/></svg>
<span style="left:1521.50px;top:577px;font:400 25.5px/25.5px 'Liberation Serif',serif;color:#c8c8c8;white-space:pre;transform-origin:0 0;transform:scaleX(0.9815);">121 cd m-2</span>
<span style="left:1521.50px;top:681px;font:400 25.5px/25.5px 'Liberation Serif',serif;color:#c8c8c8;white-space:pre;transform-origin:0 0;transform:scaleX(0.9896);">119 cd m-2</span>
<span style="left:1521.50px;top:785px;font:400 25.5px/25.5px 'Liberation Serif',serif;color:#c8c8c8;white-space:pre;transform-origin:0 0;transform:scaleX(0.9896);">117 cd m-2</span>
<span style="left:1521.50px;top:889px;font:400 25.5px/25.5px 'Liberation Serif',serif;color:#c8c8c8;white-space:pre;transform-origin:0 0;transform:scaleX(0.9896);">115 cd m-2</span>
<span style="left:1521.50px;top:993px;font:400 25.5px/25.5px 'Liberation Serif',serif;color:#c8c8c8;white-space:pre;transform-origin:0 0;transform:scaleX(0.9896);">113 cd m-2</span>
<span style="left:1521.50px;top:1097px;font:400 25.5px/25.5px 'Liberation Serif',serif;color:#c8c8c8;white-space:pre;transform-origin:0 0;">111 cd m-2</span>
<span style="left:1521.50px;top:1201px;font:400 25.5px/25.5px 'Liberation Serif',serif;color:#c8c8c8;white-space:pre;transform-origin:0 0;transform:scaleX(0.9815);">109 cd m-2</span>
<span style="left:1892.50px;top:561px;font:700 13.5px/13.5px 'Liberation Sans',sans-serif;color:#6a2c6e;white-space:pre;transform-origin:0 0;transform:scaleX(1.0617);">Near White Luminance Response</span>
<span style="left:1688.20px;top:1305px;font:400 25.5px/25.5px 'Liberation Serif',serif;color:#2c2c2c;white-space:pre;transform-origin:0 0;transform:scaleX(0.9882);">95% White</span>
<span style="left:1855.80px;top:1305px;font:400 25.5px/25.5px 'Liberation Serif',serif;color:#2c2c2c;white-space:pre;transform-origin:0 0;transform:scaleX(0.9882);">96% White</span>
<span style="left:2023.40px;top:1305px;font:400 25.5px/25.5px 'Liberation Serif',serif;color:#2c2c2c;white-space:pre;transform-origin:0 0;transform:scaleX(0.9882);">97% White</span>
<span style="left:2191.00px;top:1305px;font:400 25.5px/25.5px 'Liberation Serif',serif;color:#2c2c2c;white-space:pre;transform-origin:0 0;transform:scaleX(0.9882);">98% White</span>
<span style="left:2358.60px;top:1305px;font:400 25.5px/25.5px 'Liberation Serif',serif;color:#2c2c2c;white-space:pre;transform-origin:0 0;transform:scaleX(0.9882);">99% White</span>
<span style="left:2316.60px;top:1265px;font:700 19.5px/19.5px 'Liberation Sans',sans-serif;color:#a2a2a2;white-space:pre;transform-origin:0 0;transform:scaleX(1.0278);">hcfr.sourceforge.net</span>
<div style="left:2547px;top:136px;width:2px;height:1161px;background:#8e8e8e;"></div>
<div style="left:0px;top:1354.5px;width:2560px;height:26px;background:#f0f0f0;"></div>
<div style="left:0px;top:1354.5px;width:2px;height:22px;background:#7c7c7c;"></div>
<div style="left:24px;top:1365.5px;width:2438px;height:2px;background:#8c8c8c;"></div>
<div style="left:0px;top:1380.4px;width:2560px;height:35.5px;background:#f0f0f0;"></div>
<div style="left:277px;top:1380px;width:2283px;height:1.1px;background:#1a1a1a;"></div>
<div style="left:0px;top:1380.4px;width:105.5px;height:35.5px;background:#1a1a1a;"></div>
<div style="left:1px;top:1381.6px;width:33.5px;height:33px;background:#f0f0f0;border-left:1.5px solid #fff;border-top:1.5px solid #fff;border-right:1.5px solid #7e7e7e;border-bottom:1.5px solid #7e7e7e;"></div>
<div style="left:34.5px;top:1381.6px;width:34.5px;height:33px;background:#f0f0f0;border-left:1.5px solid #fff;border-top:1.5px solid #fff;border-right:1.5px solid #7e7e7e;border-bottom:1.5px solid #7e7e7e;"></div>
<div style="left:69px;top:1381.6px;width:35.3px;height:33px;background:#f0f0f0;border-left:1.5px solid #fff;border-top:1.5px solid #fff;border-right:1.5px solid #7e7e7e;border-bottom:1.5px solid #7e7e7e;"></div>
<svg style="left:0;top:1380px" width="106" height="36" viewBox="0 0 106 36"><path d="M14 13.500L23.500 23M23.500 13.500L14 23" stroke="#000" stroke-width="1.6" fill="none"/><path d="M54.500 13L48.500 18.300L54.500 23.600L53 18.300Z" fill="#000"/><path d="M83.500 13L89.500 18.300L83.500 23.600L85 18.300Z" fill="#000"/></svg>
<svg style="left:100px;top:1378px" width="760" height="40" viewBox="100 1378 760 40"><path d="M435 1397L428.400 1415.300M563.300 1397L556.800 1415.300" stroke="#1a1a1a" stroke-width="1.1" fill="none"/><path d="M427 1380.400L443.400 1415.300M554.800 1380.400L572.300 1415.300M837 1380.400L820 1415.300" stroke="#1a1a1a" stroke-width="1.1" fill="none"/><path d="M274.600 1415.300H820" stroke="#1a1a1a" stroke-width="1.1" fill="none"/><path d="M106 1380.400L122.500 1415.500H259.500L276.700 1380.400Z" fill="#fff"/><path d="M106 1380.400L122.500 1415.500M259.900 1415.300L276.700 1380.400M266 1397L274.600 1415.300" stroke="#1a1a1a" stroke-width="1.1" fill="none"/><path d="M122.500 1415.500H259.500" stroke="#9a9a9a" stroke-width="1"/></svg>
<span style="left:127.20px;top:1385px;font:700 27px/27px 'Liberation Sans',sans-serif;color:#000;white-space:pre;transform-origin:0 0;transform:scaleX(1.0211);">Measures</span>
<span style="left:284.80px;top:1385px;font:400 26.5px/26.5px 'Liberation Sans',sans-serif;color:#000;white-space:pre;transform-origin:0 0;transform:scaleX(1.0182);">Luminance</span>
<span style="left:450.70px;top:1385px;font:400 26.5px/26.5px 'Liberation Sans',sans-serif;color:#000;white-space:pre;transform-origin:0 0;transform:scaleX(1.0282);">Gamma</span>
<span style="left:586.80px;top:1385px;font:400 26.5px/26.5px 'Liberation Sans',sans-serif;color:#000;white-space:pre;transform-origin:0 0;transform:scaleX(1.0184);">Color temperature</span>
<svg style="left:2348px;top:1382px" width="19" height="19" viewBox="0 0 19 19"><path d="M1 1.500H17.500V10L16.500 16.500H11.500L10.500 12H8.500L7.500 16.500H3L1.500 10Z" fill="#7c7c00" stroke="#000" stroke-width="1.1"/><path d="M3 4.500Q6 2 9 4L9 2.500L13 2.500V9.500H6.500L8 8Q6 5 3 6.500Z" fill="#f41818"/><path d="M3.500 5Q6 3.500 8 5" stroke="#fff" stroke-width="1" fill="none"/><path d="M11 12H16.500L15.500 16.500H12Z" fill="#ffff00"/></svg>
<div style="left:2468px;top:1383.3px;width:14.8px;height:14.5px;background:#fff;"></div>
<div style="left:2468px;top:1383.3px;width:14.8px;height:1px;background:#828282;"></div>
<div style="left:2468px;top:1383.3px;width:1px;height:14.5px;background:#828282;"></div>
<div style="left:2469px;top:1384.3px;width:12.8px;height:1px;background:#696969;"></div>
<div style="left:2469px;top:1384.3px;width:1px;height:12.5px;background:#696969;"></div>
<div style="left:2468px;top:1396.8px;width:14.8px;height:1px;background:#fff;"></div>
<div style="left:2481.8px;top:1383.3px;width:1px;height:14.5px;background:#fff;"></div>
<div style="left:2469px;top:1395.8px;width:12.8px;height:1px;background:#e3e3e3;"></div>
<div style="left:2480.8px;top:1384.3px;width:1px;height:12.5px;background:#e3e3e3;"></div>
<span style="left:2490.60px;top:1383px;font:400 15px/15px 'Liberation Sans',sans-serif;color:#000;white-space:pre;transform-origin:0 0;transform:scaleX(0.9016);">Reference</span>
<div style="left:0px;top:1416px;width:2560px;height:22.5px;background:linear-gradient(90deg,#e4ebf5 0,#e9eef7 30%,#eef2fa 75%,#eff3fa 100%);"></div>
<div style="left:0px;top:1415.6px;width:2560px;height:1px;background:#d0d4dc;"></div>
<span style="left:3.50px;top:1422px;font:400 14.5px/14.5px 'Liberation Sans',sans-serif;color:#111;white-space:pre;transform-origin:0 0;transform:scaleX(0.9066);">Ready</span>
<div style="left:2338.5px;top:1418px;width:92.5px;height:20px;border:1.5px solid #adbfda;border-bottom:none;box-shadow:inset 1px 1px 0 #f6f8fc;"></div>
<div style="left:2435.5px;top:1418px;width:34.5px;height:20px;border:1.5px solid #adbfda;border-bottom:none;box-shadow:inset 1px 1px 0 #f6f8fc;"></div>
<div style="left:2474px;top:1418px;width:40.5px;height:20px;border:1.5px solid #adbfda;border-bottom:none;box-shadow:inset 1px 1px 0 #f6f8fc;"></div>
<div style="left:2518.5px;top:1418px;width:40.5px;height:20px;border:1.5px solid #adbfda;border-bottom:none;box-shadow:inset 1px 1px 0 #f6f8fc;"></div>
<span style="left:2476.60px;top:1421px;font:400 15px/15px 'Liberation Sans',sans-serif;color:#111;white-space:pre;transform-origin:0 0;">NUM</span>
<div style="left:0px;top:1438.5px;width:2560px;height:1.5px;background:#2a2a2a;"></div></body></html>
